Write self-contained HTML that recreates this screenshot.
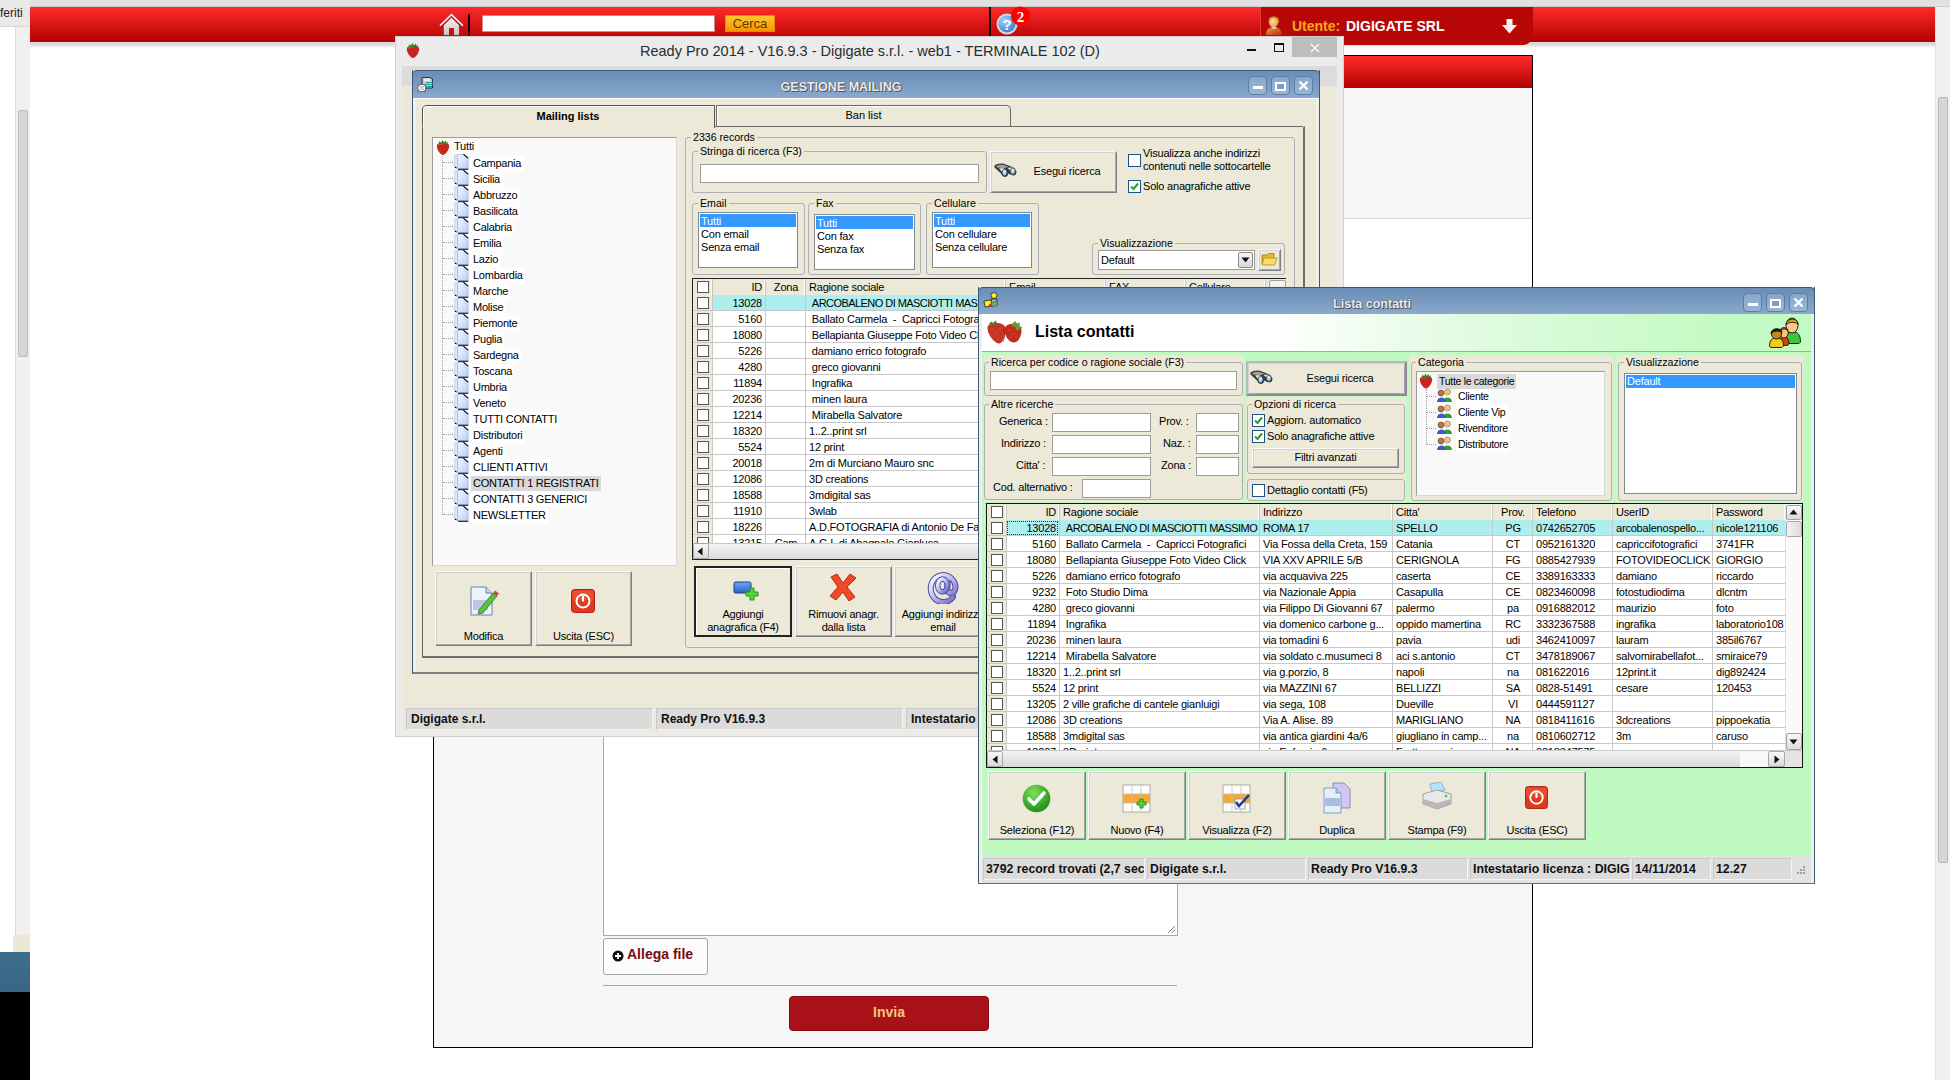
<!DOCTYPE html><html><head><meta charset="utf-8"><style>
*{box-sizing:border-box;margin:0;padding:0}
html,body{width:1950px;height:1080px;overflow:hidden;background:#fff;font-family:"Liberation Sans",sans-serif;font-size:10.6px;color:#000}
.a{position:absolute}
.t{position:absolute;white-space:nowrap;line-height:13px}
.beige{background:#ece9d8}
.grp{position:absolute;border:1px solid #aeaeb4;border-radius:3px}
.grpl{position:absolute;background:#ece9d8;padding:0 2px;line-height:12px;white-space:nowrap}
.inp{position:absolute;background:#fff;border:1px solid #7f9db9}
.btn{position:absolute;background:#ece9d8;border:1px solid #f8f8fa;border-right-color:#808084;border-bottom-color:#808084;box-shadow:inset 1px 1px 0 #d0d0d8,inset -1px -1px 0 #a6a6aa}
.cb{position:absolute;width:13px;height:13px;background:#fff;border:1px solid #1c5180}
.tbtn{position:absolute;width:19px;height:19px;border:1px solid #5c7ea6;border-radius:4px;background:linear-gradient(#86a6cb,#9ab6d6)}
</style></head><body>
<div class="a" style="left:0px;top:0px;width:1950px;height:7px;background:#e1e1e1;border-bottom:1px solid #c6cbcb"></div>
<div class="a" style="left:0px;top:0px;width:30px;height:27px;background:#e9e9e9;border-bottom:1px solid #d6d6d6"></div>
<div class="t" style="left:0px;top:7px;font-size:12px;color:#222">feriti</div>
<div class="a" style="left:15px;top:27px;width:15px;height:908px;background:#f0f0f0;border-left:1px solid #dadada"></div>
<div class="a" style="left:18px;top:110px;width:10px;height:247px;background:#d6d6d6;border:1px solid #bdbdbd;border-radius:2px"></div>
<div class="a" style="left:13px;top:935px;width:17px;height:17px;background:#ebe8d8"></div>
<div class="a" style="left:0px;top:952px;width:30px;height:40px;background:linear-gradient(#3f6e8d,#386582)"></div>
<div class="a" style="left:0px;top:992px;width:30px;height:88px;background:#000"></div>
<div class="a" style="left:1935px;top:7px;width:15px;height:1073px;background:#f0f0f0;border-left:1px solid #e2e2e2"></div>
<div class="a" style="left:1938px;top:97px;width:10px;height:766px;background:#d6d6d6;border:1px solid #b9b9b9;border-radius:2px"></div>
<div class="a" style="left:30px;top:42px;width:1905px;height:6px;background:linear-gradient(#d9d9d9 0,#dadada 45%,#ffffff)"></div>
<div class="a" style="left:30px;top:7px;width:1905px;height:35px;background:linear-gradient(#ff2b2b,#b30000)"></div>
<div class="a" style="left:433px;top:55px;width:1100px;height:993px;background:#f6f6f6;border:1px solid #000"></div>
<div class="a" style="left:434px;top:56px;width:1098px;height:32px;background:linear-gradient(#ff2b2b,#b40000)"></div>
<div class="a" style="left:434px;top:218px;width:1098px;height:482px;background:#fff;border-top:1px solid #d8d8d8"></div>
<div class="a" style="left:603px;top:700px;width:575px;height:236px;background:#fff;border:1px solid #a9a9a9"></div>
<svg class="a" style="left:1167px;top:925px" width="9" height="9" viewBox="0 0 9 9"><path d="M8 1L1 8M8 4.5L4.5 8" stroke="#808080" stroke-width="1"/></svg>
<div class="a" style="left:603px;top:938px;width:105px;height:37px;background:#fcfcfc;border:1px solid #a6a6a6;border-radius:3px"></div>
<svg class="a" style="left:612px;top:950px" width="12" height="12" viewBox="0 0 12 12"><circle cx="6" cy="6" r="5.5" fill="#111"/><path d="M6 3v6M3 6h6" stroke="#fff" stroke-width="1.8"/></svg>
<div class="t" style="left:627px;top:948px;font-size:14px;font-weight:bold;color:#7a0a10">Allega file</div>
<div class="a" style="left:603px;top:985px;width:574px;height:1px;background:#a8a8a8"></div>
<div class="a" style="left:789px;top:996px;width:200px;height:35px;background:#a81118;border-radius:4px;border:1px solid #8a0a10"></div>
<div class="t" style="left:789px;top:1006px;width:200px;text-align:center;font-size:14px;font-weight:bold;color:#f7c47c">Invia</div>
<svg class="a" style="left:439px;top:13px" width="26" height="23" viewBox="0 0 26 23">
<defs><linearGradient id="hg" x1="0" y1="0" x2="0" y2="1"><stop offset="0" stop-color="#f4f4f4"/><stop offset="1" stop-color="#c4c4c4"/></linearGradient></defs>
<path d="M1.3 12.4 L12.5 1.6 L23.5 12.4" fill="none" stroke="#7a1010" stroke-width="2.6" stroke-linecap="round" opacity="0.45" transform="translate(0,0.8)"/>
<path d="M1.3 12.4 L12.5 1.6 L23.5 12.4" fill="none" stroke="#f6f6f6" stroke-width="1.5" stroke-linecap="round"/>
<path d="M4.8 12.3 L12.5 4.8 L20 12.3 V21.2 Q20 22 19.2 22 H15 V15.8 Q15 15 14.2 15 H10.7 Q10 15 10 15.8 V22 H5.6 Q4.8 22 4.8 21.2Z" fill="url(#hg)"/>
</svg>
<div class="a" style="left:468px;top:14px;width:2px;height:22px;background:#1a0000"></div>
<div class="a" style="left:482px;top:15px;width:233px;height:17px;background:#fff;border:1px solid #d88"></div>
<div class="a" style="left:725px;top:15px;width:50px;height:17px;background:linear-gradient(#ffc733,#f59500);border:1px solid #e48a00"></div>
<div class="t" style="left:725px;top:17px;width:50px;text-align:center;font-size:13px;color:#5c3b00">Cerca</div>
<div class="a" style="left:989px;top:7px;width:2px;height:29px;background:#150000"></div>
<svg class="a" style="left:995px;top:5px" width="36" height="32" viewBox="0 0 36 32">
<defs><radialGradient id="hb" cx="0.35" cy="0.3" r="0.8"><stop offset="0" stop-color="#a8d4ff"/><stop offset="1" stop-color="#2a78d0"/></radialGradient></defs>
<circle cx="12" cy="19" r="10.5" fill="#d8d8d8"/>
<circle cx="12" cy="19" r="8.5" fill="url(#hb)"/>
<text x="12" y="24.5" font-family="Liberation Sans" font-weight="bold" font-size="15" fill="#fff" text-anchor="middle">?</text>
<circle cx="25.5" cy="11" r="9.5" fill="#ff0000"/>
<text x="25.5" y="16.5" font-family="Liberation Serif" font-weight="bold" font-size="15" fill="#fff" text-anchor="middle">2</text>
</svg>
<div class="a" style="left:1260px;top:7px;width:273px;height:38px;background:#b80707;border-bottom-right-radius:10px;border-left:1px solid #e03a3a"></div>
<svg class="a" style="left:1264px;top:14px" width="20" height="22" viewBox="0 0 20 22">
<defs><linearGradient id="pb" x1="0" y1="0" x2="1" y2="1"><stop offset="0" stop-color="#f89838"/><stop offset="1" stop-color="#b83010"/></linearGradient>
<radialGradient id="pf" cx="0.45" cy="0.4" r="0.6"><stop offset="0" stop-color="#ffd8a0"/><stop offset="1" stop-color="#f0a060"/></radialGradient></defs>
<path d="M2 21 C2 15 5 13 10 13 C15 13 17.5 15 17.5 21 Z" fill="url(#pb)"/>
<path d="M7.5 13 L12.5 13 L11.5 15 L8.5 15Z" fill="#b8d8f0"/>
<ellipse cx="9.5" cy="8" rx="4.6" ry="5.3" fill="url(#pf)"/>
<path d="M4.5 7 C4.5 1.5 14.5 0.5 15 6.5 L14.5 9.5 C14 6 12 4.5 10 4 C8 4 6 5 5 8Z" fill="#c0a010"/>
</svg>
<div class="t" style="left:1292px;top:18px;font-size:14px;font-weight:bold;color:#f9a51c;line-height:16px">Utente:</div>
<div class="t" style="left:1346px;top:18px;font-size:14px;font-weight:bold;color:#fff;line-height:16px">DIGIGATE SRL</div>
<svg class="a" style="left:1501px;top:19px" width="17" height="15" viewBox="0 0 17 15">
<path d="M5.5 0 H11.5 V6 H16 L8.5 14.5 L1 6 H5.5 Z" fill="#f2f2f2"/></svg>
<div class="a" style="left:395px;top:36px;width:949px;height:701px;background:#ebebeb;border:1px solid #cfcfcf"></div>
<svg class="a" style="left:406px;top:42px" width="14" height="17" viewBox="0 0 14 16">
<path d="M0.8 6.5 C0.8 3.8 4 3.2 7 3.6 C10 3.2 13.2 3.8 13.2 6.5 C13.2 10.5 9.2 15.6 7 15.6 C4.8 15.6 0.8 10.5 0.8 6.5Z" fill="#c8261e"/>
<path d="M2.5 6 C3 4.8 5 4.5 6 4.8" stroke="#e86050" stroke-width="0.9" fill="none"/>
<g fill="#8a1010"><circle cx="4" cy="8" r="0.4"/><circle cx="7" cy="9" r="0.4"/><circle cx="10" cy="8" r="0.4"/><circle cx="5.5" cy="11.5" r="0.4"/><circle cx="8.5" cy="11.5" r="0.4"/></g>
<path d="M2.5 4.2 L3.5 1.5 L5 3.2 L6.5 0.5 L8 3 L9.5 1 L10.5 3.2 L12 2 L11.5 4.5 L7 5 Z" fill="#3f7f22"/>
</svg>
<div class="t" style="left:640px;top:43px;font-size:14.5px;color:#2b2b2b;line-height:17px">Ready Pro 2014 - V16.9.3 - Digigate s.r.l. - web1 - TERMINALE 102 (D)</div>
<div class="a" style="left:1247px;top:49px;width:9px;height:2px;background:#111"></div>
<div class="a" style="left:1274px;top:43px;width:10px;height:9px;border:1px solid #111;border-top-width:2px"></div>
<div class="a" style="left:1292px;top:37px;width:45px;height:20px;background:#bdbdbd"></div>
<svg class="a" style="left:1310px;top:43px" width="10" height="10" viewBox="0 0 10 10"><path d="M1 1L9 9M9 1L1 9" stroke="#fff" stroke-width="1.3"/></svg>
<div class="a" style="left:402px;top:66px;width:935px;height:641px;background:#ece9d8"></div>
<div class="a" style="left:402px;top:66px;width:935px;height:20px;background:#dcdcdc"></div>
<div class="a" style="left:402px;top:707px;width:935px;height:24px;background:#ece9d8"></div>
<div class="a" style="left:406px;top:708px;width:247px;height:22px;background:#dbdbdb;border:1px solid #c8c8c8;border-bottom-color:#f4f4f4;border-right-color:#f4f4f4"></div>
<div class="t" style="left:411px;top:712px;font-size:12px;font-weight:bold;color:#111;line-height:14px">Digigate s.r.l.</div>
<div class="a" style="left:656px;top:708px;width:247px;height:22px;background:#dbdbdb;border:1px solid #c8c8c8;border-bottom-color:#f4f4f4;border-right-color:#f4f4f4"></div>
<div class="t" style="left:661px;top:712px;font-size:12px;font-weight:bold;color:#111;line-height:14px">Ready Pro V16.9.3</div>
<div class="a" style="left:906px;top:708px;width:431px;height:22px;background:#dbdbdb;border:1px solid #c8c8c8;border-bottom-color:#f4f4f4;border-right-color:#f4f4f4"></div>
<div class="t" style="left:911px;top:712px;font-size:12px;font-weight:bold;color:#111;line-height:14px">Intestatario</div>
<div class="a" style="left:412px;top:70px;width:908px;height:604px;background:#ece9d8;border:1px solid #3f5670;border-top:none;border-bottom-color:#808080"></div>
<div class="a" style="left:413px;top:98px;width:3px;height:575px;background:#f1f1f1"></div>
<div class="a" style="left:1316px;top:98px;width:3px;height:575px;background:#f1f1f1"></div>
<div class="a" style="left:412px;top:70px;width:908px;height:28px;background:linear-gradient(#698db6,#8aa9cd);border:1px solid #3f5670;border-bottom:none;border-radius:5px 5px 0 0"></div>
<div class="t" style="left:760px;top:80px;width:162px;text-align:center;font-size:12.5px;font-weight:bold;color:#ececec;text-shadow:1px 1px 0 #555,0 0 1px #333;line-height:14px">GESTIONE MAILING</div>
<svg class="a" style="left:417px;top:76px" width="17" height="17" viewBox="0 0 17 17">
<path d="M5 1.5 H13 L15.5 3 V12 H5Z" fill="#c8c8c8" stroke="#222" stroke-width="0.9"/>
<rect x="7" y="2.5" width="6" height="3" fill="#e8e8e8"/>
<path d="M9 6.5H16M9 8.5H16M9 10.5H15" stroke="#1a9a9a" stroke-width="1.1"/>
<path d="M1 8.5 L8.5 8.5 L8.5 15.5 L1 15.5 Z" fill="#fbfbfb" stroke="#666" stroke-width="0.9"/>
<path d="M1 8.5 L4.75 12 L8.5 8.5 M1 15.5 L4 12.5 M8.5 15.5 L5.5 12.5" fill="none" stroke="#777" stroke-width="0.8"/>
</svg>
<div class="tbtn" style="left:1248px;top:76px"></div>
<div class="tbtn" style="left:1271px;top:76px"></div>
<div class="tbtn" style="left:1294px;top:76px"></div>
<div class="a" style="left:1253px;top:86px;width:10px;height:3px;background:#fff"></div>
<div class="a" style="left:1275px;top:82px;width:11px;height:9px;border:2px solid #fff;border-top-width:2px;background:#7f9dc2"></div>
<svg class="a" style="left:1298px;top:80px" width="11" height="11" viewBox="0 0 11 11"><path d="M1.5 1.5L9.5 9.5M9.5 1.5L1.5 9.5" stroke="#fff" stroke-width="2.4"/></svg>
<div class="a" style="left:413px;top:98px;width:906px;height:1px;background:#fff"></div>
<div class="a" style="left:413px;top:672px;width:906px;height:1px;background:#808080"></div>
<svg class="a" style="left:422px;top:105px" width="293" height="23" viewBox="0 0 293 23">
<path d="M0.5 23 V3 L3 0.5 H292.5 V23" fill="#ece9d8" stroke="#555" stroke-width="1"/>
<path d="M1.5 23 V3.5 L3.5 1.5 H291.5" fill="none" stroke="#fff" stroke-width="1"/>
</svg>
<div class="t" style="left:422px;top:110px;width:292px;text-align:center;font-weight:bold;font-size:11px">Mailing lists</div>
<div class="a" style="left:716px;top:105px;width:295px;height:21px;background:#ece9d8;border:1px solid #6a6a6a;border-bottom:none;border-radius:0 5px 0 0;box-shadow:inset 1px 1px 0 #fff"></div>
<div class="t" style="left:716px;top:109px;width:295px;text-align:center;font-size:11px">Ban list</div>
<div class="a" style="left:422px;top:126px;width:883px;height:532px;border:1px solid #fff;border-right:2px solid #6e6e6e;border-bottom:2px solid #6e6e6e;border-left-color:#5f5f5f"></div>
<div class="a" style="left:423px;top:126px;width:292px;height:1px;background:#ece9d8"></div>
<div class="a" style="left:714px;top:126px;width:589px;height:1px;background:#6e6e6e"></div>
<div class="a" style="left:432px;top:137px;width:245px;height:429px;background:#f9f9f9;border:1px solid #9c9c9c;border-right-color:#d8d8d8;border-bottom-color:#d8d8d8"></div>
<svg class="a" style="left:436px;top:139px" width="14" height="17" viewBox="0 0 14 16">
<path d="M0.8 6.5 C0.8 3.8 4 3.2 7 3.6 C10 3.2 13.2 3.8 13.2 6.5 C13.2 10.5 9.2 15.6 7 15.6 C4.8 15.6 0.8 10.5 0.8 6.5Z" fill="#c8261e"/>
<path d="M2.5 6 C3 4.8 5 4.5 6 4.8" stroke="#e86050" stroke-width="0.9" fill="none"/>
<g fill="#8a1010"><circle cx="4" cy="8" r="0.4"/><circle cx="7" cy="9" r="0.4"/><circle cx="10" cy="8" r="0.4"/><circle cx="5.5" cy="11.5" r="0.4"/><circle cx="8.5" cy="11.5" r="0.4"/></g>
<path d="M2.5 4.2 L3.5 1.5 L5 3.2 L6.5 0.5 L8 3 L9.5 1 L10.5 3.2 L12 2 L11.5 4.5 L7 5 Z" fill="#3f7f22"/>
</svg>
<div class="a" style="left:452px;top:141px;width:26px;height:14px;background:#fcfcfc"></div>
<div class="t" style="left:454px;top:140px;font-size:11px;letter-spacing:-0.2px">Tutti</div>
<div class="a" style="left:442px;top:156px;width:1px;height:359px;border-left:1px dotted #a0a0a0"></div>
<div class="a" style="left:443px;top:162px;width:10px;height:1px;border-top:1px dotted #a0a0a0"></div>
<svg class="a" style="left:454px;top:154px" width="15" height="16" viewBox="0 0 15 16">
<defs><linearGradient id="pg454154" x1="0" y1="0" x2="1" y2="1"><stop offset="0" stop-color="#f4f8ff"/><stop offset="1" stop-color="#b8cff0"/></linearGradient></defs>
<path d="M0.5 1 H4 V14 H2 L0.5 12.5Z" fill="#dfe9fa" stroke="#a9bde8" stroke-width="0.6"/>
<path d="M3.5 0.5 H10 L14 4 V15 H4 L3.5 14.5Z" fill="url(#pg454154)" stroke="#9fb5e6" stroke-width="0.8"/>
<path d="M9.5 0.3 L14.2 4.2" stroke="#000" stroke-width="1.1"/>
<path d="M4 15.2 H14.2 M0.8 12.8 L2.5 14.2" stroke="#000" stroke-width="1.1"/>
</svg>
<div class="t" style="left:471px;top:156px;font-size:11px;letter-spacing:-0.25px;padding:0 2px;background:#ffffff;line-height:15px">Campania</div>
<div class="a" style="left:443px;top:178px;width:10px;height:1px;border-top:1px dotted #a0a0a0"></div>
<svg class="a" style="left:454px;top:170px" width="15" height="16" viewBox="0 0 15 16">
<defs><linearGradient id="pg454170" x1="0" y1="0" x2="1" y2="1"><stop offset="0" stop-color="#f4f8ff"/><stop offset="1" stop-color="#b8cff0"/></linearGradient></defs>
<path d="M0.5 1 H4 V14 H2 L0.5 12.5Z" fill="#dfe9fa" stroke="#a9bde8" stroke-width="0.6"/>
<path d="M3.5 0.5 H10 L14 4 V15 H4 L3.5 14.5Z" fill="url(#pg454170)" stroke="#9fb5e6" stroke-width="0.8"/>
<path d="M9.5 0.3 L14.2 4.2" stroke="#000" stroke-width="1.1"/>
<path d="M4 15.2 H14.2 M0.8 12.8 L2.5 14.2" stroke="#000" stroke-width="1.1"/>
</svg>
<div class="t" style="left:471px;top:172px;font-size:11px;letter-spacing:-0.25px;padding:0 2px;background:#ffffff;line-height:15px">Sicilia</div>
<div class="a" style="left:443px;top:194px;width:10px;height:1px;border-top:1px dotted #a0a0a0"></div>
<svg class="a" style="left:454px;top:186px" width="15" height="16" viewBox="0 0 15 16">
<defs><linearGradient id="pg454186" x1="0" y1="0" x2="1" y2="1"><stop offset="0" stop-color="#f4f8ff"/><stop offset="1" stop-color="#b8cff0"/></linearGradient></defs>
<path d="M0.5 1 H4 V14 H2 L0.5 12.5Z" fill="#dfe9fa" stroke="#a9bde8" stroke-width="0.6"/>
<path d="M3.5 0.5 H10 L14 4 V15 H4 L3.5 14.5Z" fill="url(#pg454186)" stroke="#9fb5e6" stroke-width="0.8"/>
<path d="M9.5 0.3 L14.2 4.2" stroke="#000" stroke-width="1.1"/>
<path d="M4 15.2 H14.2 M0.8 12.8 L2.5 14.2" stroke="#000" stroke-width="1.1"/>
</svg>
<div class="t" style="left:471px;top:188px;font-size:11px;letter-spacing:-0.25px;padding:0 2px;background:#ffffff;line-height:15px">Abbruzzo</div>
<div class="a" style="left:443px;top:210px;width:10px;height:1px;border-top:1px dotted #a0a0a0"></div>
<svg class="a" style="left:454px;top:202px" width="15" height="16" viewBox="0 0 15 16">
<defs><linearGradient id="pg454202" x1="0" y1="0" x2="1" y2="1"><stop offset="0" stop-color="#f4f8ff"/><stop offset="1" stop-color="#b8cff0"/></linearGradient></defs>
<path d="M0.5 1 H4 V14 H2 L0.5 12.5Z" fill="#dfe9fa" stroke="#a9bde8" stroke-width="0.6"/>
<path d="M3.5 0.5 H10 L14 4 V15 H4 L3.5 14.5Z" fill="url(#pg454202)" stroke="#9fb5e6" stroke-width="0.8"/>
<path d="M9.5 0.3 L14.2 4.2" stroke="#000" stroke-width="1.1"/>
<path d="M4 15.2 H14.2 M0.8 12.8 L2.5 14.2" stroke="#000" stroke-width="1.1"/>
</svg>
<div class="t" style="left:471px;top:204px;font-size:11px;letter-spacing:-0.25px;padding:0 2px;background:#ffffff;line-height:15px">Basilicata</div>
<div class="a" style="left:443px;top:226px;width:10px;height:1px;border-top:1px dotted #a0a0a0"></div>
<svg class="a" style="left:454px;top:218px" width="15" height="16" viewBox="0 0 15 16">
<defs><linearGradient id="pg454218" x1="0" y1="0" x2="1" y2="1"><stop offset="0" stop-color="#f4f8ff"/><stop offset="1" stop-color="#b8cff0"/></linearGradient></defs>
<path d="M0.5 1 H4 V14 H2 L0.5 12.5Z" fill="#dfe9fa" stroke="#a9bde8" stroke-width="0.6"/>
<path d="M3.5 0.5 H10 L14 4 V15 H4 L3.5 14.5Z" fill="url(#pg454218)" stroke="#9fb5e6" stroke-width="0.8"/>
<path d="M9.5 0.3 L14.2 4.2" stroke="#000" stroke-width="1.1"/>
<path d="M4 15.2 H14.2 M0.8 12.8 L2.5 14.2" stroke="#000" stroke-width="1.1"/>
</svg>
<div class="t" style="left:471px;top:220px;font-size:11px;letter-spacing:-0.25px;padding:0 2px;background:#ffffff;line-height:15px">Calabria</div>
<div class="a" style="left:443px;top:242px;width:10px;height:1px;border-top:1px dotted #a0a0a0"></div>
<svg class="a" style="left:454px;top:234px" width="15" height="16" viewBox="0 0 15 16">
<defs><linearGradient id="pg454234" x1="0" y1="0" x2="1" y2="1"><stop offset="0" stop-color="#f4f8ff"/><stop offset="1" stop-color="#b8cff0"/></linearGradient></defs>
<path d="M0.5 1 H4 V14 H2 L0.5 12.5Z" fill="#dfe9fa" stroke="#a9bde8" stroke-width="0.6"/>
<path d="M3.5 0.5 H10 L14 4 V15 H4 L3.5 14.5Z" fill="url(#pg454234)" stroke="#9fb5e6" stroke-width="0.8"/>
<path d="M9.5 0.3 L14.2 4.2" stroke="#000" stroke-width="1.1"/>
<path d="M4 15.2 H14.2 M0.8 12.8 L2.5 14.2" stroke="#000" stroke-width="1.1"/>
</svg>
<div class="t" style="left:471px;top:236px;font-size:11px;letter-spacing:-0.25px;padding:0 2px;background:#ffffff;line-height:15px">Emilia</div>
<div class="a" style="left:443px;top:258px;width:10px;height:1px;border-top:1px dotted #a0a0a0"></div>
<svg class="a" style="left:454px;top:250px" width="15" height="16" viewBox="0 0 15 16">
<defs><linearGradient id="pg454250" x1="0" y1="0" x2="1" y2="1"><stop offset="0" stop-color="#f4f8ff"/><stop offset="1" stop-color="#b8cff0"/></linearGradient></defs>
<path d="M0.5 1 H4 V14 H2 L0.5 12.5Z" fill="#dfe9fa" stroke="#a9bde8" stroke-width="0.6"/>
<path d="M3.5 0.5 H10 L14 4 V15 H4 L3.5 14.5Z" fill="url(#pg454250)" stroke="#9fb5e6" stroke-width="0.8"/>
<path d="M9.5 0.3 L14.2 4.2" stroke="#000" stroke-width="1.1"/>
<path d="M4 15.2 H14.2 M0.8 12.8 L2.5 14.2" stroke="#000" stroke-width="1.1"/>
</svg>
<div class="t" style="left:471px;top:252px;font-size:11px;letter-spacing:-0.25px;padding:0 2px;background:#ffffff;line-height:15px">Lazio</div>
<div class="a" style="left:443px;top:274px;width:10px;height:1px;border-top:1px dotted #a0a0a0"></div>
<svg class="a" style="left:454px;top:266px" width="15" height="16" viewBox="0 0 15 16">
<defs><linearGradient id="pg454266" x1="0" y1="0" x2="1" y2="1"><stop offset="0" stop-color="#f4f8ff"/><stop offset="1" stop-color="#b8cff0"/></linearGradient></defs>
<path d="M0.5 1 H4 V14 H2 L0.5 12.5Z" fill="#dfe9fa" stroke="#a9bde8" stroke-width="0.6"/>
<path d="M3.5 0.5 H10 L14 4 V15 H4 L3.5 14.5Z" fill="url(#pg454266)" stroke="#9fb5e6" stroke-width="0.8"/>
<path d="M9.5 0.3 L14.2 4.2" stroke="#000" stroke-width="1.1"/>
<path d="M4 15.2 H14.2 M0.8 12.8 L2.5 14.2" stroke="#000" stroke-width="1.1"/>
</svg>
<div class="t" style="left:471px;top:268px;font-size:11px;letter-spacing:-0.25px;padding:0 2px;background:#ffffff;line-height:15px">Lombardia</div>
<div class="a" style="left:443px;top:290px;width:10px;height:1px;border-top:1px dotted #a0a0a0"></div>
<svg class="a" style="left:454px;top:282px" width="15" height="16" viewBox="0 0 15 16">
<defs><linearGradient id="pg454282" x1="0" y1="0" x2="1" y2="1"><stop offset="0" stop-color="#f4f8ff"/><stop offset="1" stop-color="#b8cff0"/></linearGradient></defs>
<path d="M0.5 1 H4 V14 H2 L0.5 12.5Z" fill="#dfe9fa" stroke="#a9bde8" stroke-width="0.6"/>
<path d="M3.5 0.5 H10 L14 4 V15 H4 L3.5 14.5Z" fill="url(#pg454282)" stroke="#9fb5e6" stroke-width="0.8"/>
<path d="M9.5 0.3 L14.2 4.2" stroke="#000" stroke-width="1.1"/>
<path d="M4 15.2 H14.2 M0.8 12.8 L2.5 14.2" stroke="#000" stroke-width="1.1"/>
</svg>
<div class="t" style="left:471px;top:284px;font-size:11px;letter-spacing:-0.25px;padding:0 2px;background:#ffffff;line-height:15px">Marche</div>
<div class="a" style="left:443px;top:306px;width:10px;height:1px;border-top:1px dotted #a0a0a0"></div>
<svg class="a" style="left:454px;top:298px" width="15" height="16" viewBox="0 0 15 16">
<defs><linearGradient id="pg454298" x1="0" y1="0" x2="1" y2="1"><stop offset="0" stop-color="#f4f8ff"/><stop offset="1" stop-color="#b8cff0"/></linearGradient></defs>
<path d="M0.5 1 H4 V14 H2 L0.5 12.5Z" fill="#dfe9fa" stroke="#a9bde8" stroke-width="0.6"/>
<path d="M3.5 0.5 H10 L14 4 V15 H4 L3.5 14.5Z" fill="url(#pg454298)" stroke="#9fb5e6" stroke-width="0.8"/>
<path d="M9.5 0.3 L14.2 4.2" stroke="#000" stroke-width="1.1"/>
<path d="M4 15.2 H14.2 M0.8 12.8 L2.5 14.2" stroke="#000" stroke-width="1.1"/>
</svg>
<div class="t" style="left:471px;top:300px;font-size:11px;letter-spacing:-0.25px;padding:0 2px;background:#ffffff;line-height:15px">Molise</div>
<div class="a" style="left:443px;top:322px;width:10px;height:1px;border-top:1px dotted #a0a0a0"></div>
<svg class="a" style="left:454px;top:314px" width="15" height="16" viewBox="0 0 15 16">
<defs><linearGradient id="pg454314" x1="0" y1="0" x2="1" y2="1"><stop offset="0" stop-color="#f4f8ff"/><stop offset="1" stop-color="#b8cff0"/></linearGradient></defs>
<path d="M0.5 1 H4 V14 H2 L0.5 12.5Z" fill="#dfe9fa" stroke="#a9bde8" stroke-width="0.6"/>
<path d="M3.5 0.5 H10 L14 4 V15 H4 L3.5 14.5Z" fill="url(#pg454314)" stroke="#9fb5e6" stroke-width="0.8"/>
<path d="M9.5 0.3 L14.2 4.2" stroke="#000" stroke-width="1.1"/>
<path d="M4 15.2 H14.2 M0.8 12.8 L2.5 14.2" stroke="#000" stroke-width="1.1"/>
</svg>
<div class="t" style="left:471px;top:316px;font-size:11px;letter-spacing:-0.25px;padding:0 2px;background:#ffffff;line-height:15px">Piemonte</div>
<div class="a" style="left:443px;top:338px;width:10px;height:1px;border-top:1px dotted #a0a0a0"></div>
<svg class="a" style="left:454px;top:330px" width="15" height="16" viewBox="0 0 15 16">
<defs><linearGradient id="pg454330" x1="0" y1="0" x2="1" y2="1"><stop offset="0" stop-color="#f4f8ff"/><stop offset="1" stop-color="#b8cff0"/></linearGradient></defs>
<path d="M0.5 1 H4 V14 H2 L0.5 12.5Z" fill="#dfe9fa" stroke="#a9bde8" stroke-width="0.6"/>
<path d="M3.5 0.5 H10 L14 4 V15 H4 L3.5 14.5Z" fill="url(#pg454330)" stroke="#9fb5e6" stroke-width="0.8"/>
<path d="M9.5 0.3 L14.2 4.2" stroke="#000" stroke-width="1.1"/>
<path d="M4 15.2 H14.2 M0.8 12.8 L2.5 14.2" stroke="#000" stroke-width="1.1"/>
</svg>
<div class="t" style="left:471px;top:332px;font-size:11px;letter-spacing:-0.25px;padding:0 2px;background:#ffffff;line-height:15px">Puglia</div>
<div class="a" style="left:443px;top:354px;width:10px;height:1px;border-top:1px dotted #a0a0a0"></div>
<svg class="a" style="left:454px;top:346px" width="15" height="16" viewBox="0 0 15 16">
<defs><linearGradient id="pg454346" x1="0" y1="0" x2="1" y2="1"><stop offset="0" stop-color="#f4f8ff"/><stop offset="1" stop-color="#b8cff0"/></linearGradient></defs>
<path d="M0.5 1 H4 V14 H2 L0.5 12.5Z" fill="#dfe9fa" stroke="#a9bde8" stroke-width="0.6"/>
<path d="M3.5 0.5 H10 L14 4 V15 H4 L3.5 14.5Z" fill="url(#pg454346)" stroke="#9fb5e6" stroke-width="0.8"/>
<path d="M9.5 0.3 L14.2 4.2" stroke="#000" stroke-width="1.1"/>
<path d="M4 15.2 H14.2 M0.8 12.8 L2.5 14.2" stroke="#000" stroke-width="1.1"/>
</svg>
<div class="t" style="left:471px;top:348px;font-size:11px;letter-spacing:-0.25px;padding:0 2px;background:#ffffff;line-height:15px">Sardegna</div>
<div class="a" style="left:443px;top:370px;width:10px;height:1px;border-top:1px dotted #a0a0a0"></div>
<svg class="a" style="left:454px;top:362px" width="15" height="16" viewBox="0 0 15 16">
<defs><linearGradient id="pg454362" x1="0" y1="0" x2="1" y2="1"><stop offset="0" stop-color="#f4f8ff"/><stop offset="1" stop-color="#b8cff0"/></linearGradient></defs>
<path d="M0.5 1 H4 V14 H2 L0.5 12.5Z" fill="#dfe9fa" stroke="#a9bde8" stroke-width="0.6"/>
<path d="M3.5 0.5 H10 L14 4 V15 H4 L3.5 14.5Z" fill="url(#pg454362)" stroke="#9fb5e6" stroke-width="0.8"/>
<path d="M9.5 0.3 L14.2 4.2" stroke="#000" stroke-width="1.1"/>
<path d="M4 15.2 H14.2 M0.8 12.8 L2.5 14.2" stroke="#000" stroke-width="1.1"/>
</svg>
<div class="t" style="left:471px;top:364px;font-size:11px;letter-spacing:-0.25px;padding:0 2px;background:#ffffff;line-height:15px">Toscana</div>
<div class="a" style="left:443px;top:386px;width:10px;height:1px;border-top:1px dotted #a0a0a0"></div>
<svg class="a" style="left:454px;top:378px" width="15" height="16" viewBox="0 0 15 16">
<defs><linearGradient id="pg454378" x1="0" y1="0" x2="1" y2="1"><stop offset="0" stop-color="#f4f8ff"/><stop offset="1" stop-color="#b8cff0"/></linearGradient></defs>
<path d="M0.5 1 H4 V14 H2 L0.5 12.5Z" fill="#dfe9fa" stroke="#a9bde8" stroke-width="0.6"/>
<path d="M3.5 0.5 H10 L14 4 V15 H4 L3.5 14.5Z" fill="url(#pg454378)" stroke="#9fb5e6" stroke-width="0.8"/>
<path d="M9.5 0.3 L14.2 4.2" stroke="#000" stroke-width="1.1"/>
<path d="M4 15.2 H14.2 M0.8 12.8 L2.5 14.2" stroke="#000" stroke-width="1.1"/>
</svg>
<div class="t" style="left:471px;top:380px;font-size:11px;letter-spacing:-0.25px;padding:0 2px;background:#ffffff;line-height:15px">Umbria</div>
<div class="a" style="left:443px;top:402px;width:10px;height:1px;border-top:1px dotted #a0a0a0"></div>
<svg class="a" style="left:454px;top:394px" width="15" height="16" viewBox="0 0 15 16">
<defs><linearGradient id="pg454394" x1="0" y1="0" x2="1" y2="1"><stop offset="0" stop-color="#f4f8ff"/><stop offset="1" stop-color="#b8cff0"/></linearGradient></defs>
<path d="M0.5 1 H4 V14 H2 L0.5 12.5Z" fill="#dfe9fa" stroke="#a9bde8" stroke-width="0.6"/>
<path d="M3.5 0.5 H10 L14 4 V15 H4 L3.5 14.5Z" fill="url(#pg454394)" stroke="#9fb5e6" stroke-width="0.8"/>
<path d="M9.5 0.3 L14.2 4.2" stroke="#000" stroke-width="1.1"/>
<path d="M4 15.2 H14.2 M0.8 12.8 L2.5 14.2" stroke="#000" stroke-width="1.1"/>
</svg>
<div class="t" style="left:471px;top:396px;font-size:11px;letter-spacing:-0.25px;padding:0 2px;background:#ffffff;line-height:15px">Veneto</div>
<div class="a" style="left:443px;top:418px;width:10px;height:1px;border-top:1px dotted #a0a0a0"></div>
<svg class="a" style="left:454px;top:410px" width="15" height="16" viewBox="0 0 15 16">
<defs><linearGradient id="pg454410" x1="0" y1="0" x2="1" y2="1"><stop offset="0" stop-color="#f4f8ff"/><stop offset="1" stop-color="#b8cff0"/></linearGradient></defs>
<path d="M0.5 1 H4 V14 H2 L0.5 12.5Z" fill="#dfe9fa" stroke="#a9bde8" stroke-width="0.6"/>
<path d="M3.5 0.5 H10 L14 4 V15 H4 L3.5 14.5Z" fill="url(#pg454410)" stroke="#9fb5e6" stroke-width="0.8"/>
<path d="M9.5 0.3 L14.2 4.2" stroke="#000" stroke-width="1.1"/>
<path d="M4 15.2 H14.2 M0.8 12.8 L2.5 14.2" stroke="#000" stroke-width="1.1"/>
</svg>
<div class="t" style="left:471px;top:412px;font-size:11px;letter-spacing:-0.25px;padding:0 2px;background:#ffffff;line-height:15px">TUTTI CONTATTI</div>
<div class="a" style="left:443px;top:434px;width:10px;height:1px;border-top:1px dotted #a0a0a0"></div>
<svg class="a" style="left:454px;top:426px" width="15" height="16" viewBox="0 0 15 16">
<defs><linearGradient id="pg454426" x1="0" y1="0" x2="1" y2="1"><stop offset="0" stop-color="#f4f8ff"/><stop offset="1" stop-color="#b8cff0"/></linearGradient></defs>
<path d="M0.5 1 H4 V14 H2 L0.5 12.5Z" fill="#dfe9fa" stroke="#a9bde8" stroke-width="0.6"/>
<path d="M3.5 0.5 H10 L14 4 V15 H4 L3.5 14.5Z" fill="url(#pg454426)" stroke="#9fb5e6" stroke-width="0.8"/>
<path d="M9.5 0.3 L14.2 4.2" stroke="#000" stroke-width="1.1"/>
<path d="M4 15.2 H14.2 M0.8 12.8 L2.5 14.2" stroke="#000" stroke-width="1.1"/>
</svg>
<div class="t" style="left:471px;top:428px;font-size:11px;letter-spacing:-0.25px;padding:0 2px;background:#ffffff;line-height:15px">Distributori</div>
<div class="a" style="left:443px;top:450px;width:10px;height:1px;border-top:1px dotted #a0a0a0"></div>
<svg class="a" style="left:454px;top:442px" width="15" height="16" viewBox="0 0 15 16">
<defs><linearGradient id="pg454442" x1="0" y1="0" x2="1" y2="1"><stop offset="0" stop-color="#f4f8ff"/><stop offset="1" stop-color="#b8cff0"/></linearGradient></defs>
<path d="M0.5 1 H4 V14 H2 L0.5 12.5Z" fill="#dfe9fa" stroke="#a9bde8" stroke-width="0.6"/>
<path d="M3.5 0.5 H10 L14 4 V15 H4 L3.5 14.5Z" fill="url(#pg454442)" stroke="#9fb5e6" stroke-width="0.8"/>
<path d="M9.5 0.3 L14.2 4.2" stroke="#000" stroke-width="1.1"/>
<path d="M4 15.2 H14.2 M0.8 12.8 L2.5 14.2" stroke="#000" stroke-width="1.1"/>
</svg>
<div class="t" style="left:471px;top:444px;font-size:11px;letter-spacing:-0.25px;padding:0 2px;background:#ffffff;line-height:15px">Agenti</div>
<div class="a" style="left:443px;top:466px;width:10px;height:1px;border-top:1px dotted #a0a0a0"></div>
<svg class="a" style="left:454px;top:458px" width="15" height="16" viewBox="0 0 15 16">
<defs><linearGradient id="pg454458" x1="0" y1="0" x2="1" y2="1"><stop offset="0" stop-color="#f4f8ff"/><stop offset="1" stop-color="#b8cff0"/></linearGradient></defs>
<path d="M0.5 1 H4 V14 H2 L0.5 12.5Z" fill="#dfe9fa" stroke="#a9bde8" stroke-width="0.6"/>
<path d="M3.5 0.5 H10 L14 4 V15 H4 L3.5 14.5Z" fill="url(#pg454458)" stroke="#9fb5e6" stroke-width="0.8"/>
<path d="M9.5 0.3 L14.2 4.2" stroke="#000" stroke-width="1.1"/>
<path d="M4 15.2 H14.2 M0.8 12.8 L2.5 14.2" stroke="#000" stroke-width="1.1"/>
</svg>
<div class="t" style="left:471px;top:460px;font-size:11px;letter-spacing:-0.25px;padding:0 2px;background:#ffffff;line-height:15px">CLIENTI ATTIVI</div>
<div class="a" style="left:443px;top:482px;width:10px;height:1px;border-top:1px dotted #a0a0a0"></div>
<svg class="a" style="left:454px;top:474px" width="15" height="16" viewBox="0 0 15 16">
<defs><linearGradient id="pg454474" x1="0" y1="0" x2="1" y2="1"><stop offset="0" stop-color="#f4f8ff"/><stop offset="1" stop-color="#b8cff0"/></linearGradient></defs>
<path d="M0.5 1 H4 V14 H2 L0.5 12.5Z" fill="#dfe9fa" stroke="#a9bde8" stroke-width="0.6"/>
<path d="M3.5 0.5 H10 L14 4 V15 H4 L3.5 14.5Z" fill="url(#pg454474)" stroke="#9fb5e6" stroke-width="0.8"/>
<path d="M9.5 0.3 L14.2 4.2" stroke="#000" stroke-width="1.1"/>
<path d="M4 15.2 H14.2 M0.8 12.8 L2.5 14.2" stroke="#000" stroke-width="1.1"/>
</svg>
<div class="t" style="left:471px;top:476px;font-size:11px;letter-spacing:-0.25px;padding:0 2px;background:#d9d9d9;line-height:15px">CONTATTI 1 REGISTRATI</div>
<div class="a" style="left:443px;top:498px;width:10px;height:1px;border-top:1px dotted #a0a0a0"></div>
<svg class="a" style="left:454px;top:490px" width="15" height="16" viewBox="0 0 15 16">
<defs><linearGradient id="pg454490" x1="0" y1="0" x2="1" y2="1"><stop offset="0" stop-color="#f4f8ff"/><stop offset="1" stop-color="#b8cff0"/></linearGradient></defs>
<path d="M0.5 1 H4 V14 H2 L0.5 12.5Z" fill="#dfe9fa" stroke="#a9bde8" stroke-width="0.6"/>
<path d="M3.5 0.5 H10 L14 4 V15 H4 L3.5 14.5Z" fill="url(#pg454490)" stroke="#9fb5e6" stroke-width="0.8"/>
<path d="M9.5 0.3 L14.2 4.2" stroke="#000" stroke-width="1.1"/>
<path d="M4 15.2 H14.2 M0.8 12.8 L2.5 14.2" stroke="#000" stroke-width="1.1"/>
</svg>
<div class="t" style="left:471px;top:492px;font-size:11px;letter-spacing:-0.25px;padding:0 2px;background:#ffffff;line-height:15px">CONTATTI 3 GENERICI</div>
<div class="a" style="left:443px;top:514px;width:10px;height:1px;border-top:1px dotted #a0a0a0"></div>
<svg class="a" style="left:454px;top:506px" width="15" height="16" viewBox="0 0 15 16">
<defs><linearGradient id="pg454506" x1="0" y1="0" x2="1" y2="1"><stop offset="0" stop-color="#f4f8ff"/><stop offset="1" stop-color="#b8cff0"/></linearGradient></defs>
<path d="M0.5 1 H4 V14 H2 L0.5 12.5Z" fill="#dfe9fa" stroke="#a9bde8" stroke-width="0.6"/>
<path d="M3.5 0.5 H10 L14 4 V15 H4 L3.5 14.5Z" fill="url(#pg454506)" stroke="#9fb5e6" stroke-width="0.8"/>
<path d="M9.5 0.3 L14.2 4.2" stroke="#000" stroke-width="1.1"/>
<path d="M4 15.2 H14.2 M0.8 12.8 L2.5 14.2" stroke="#000" stroke-width="1.1"/>
</svg>
<div class="t" style="left:471px;top:508px;font-size:11px;letter-spacing:-0.25px;padding:0 2px;background:#ffffff;line-height:15px">NEWSLETTER</div>
<div class="btn" style="left:435px;top:571px;width:97px;height:75px;"></div>
<div class="t" style="left:435px;top:630px;width:97px;text-align:center;font-size:11px;letter-spacing:-0.2px">Modifica</div>
<svg class="a" style="left:469px;top:585px" width="30" height="32" viewBox="0 0 30 32">
<path d="M2 2 H17 L23 8 V30 H2Z" fill="#eef3fb" stroke="#6080b8" stroke-width="1"/>
<path d="M17 2 V8 H23" fill="#c8d6ee" stroke="#6080b8" stroke-width="1"/>
<rect x="4" y="15" width="15" height="10" fill="#b8c8e0"/>
<path d="M10 25 L24 8 L28 11 L14 28 L9 29Z" fill="#5cc040" stroke="#2a7a20" stroke-width="0.8"/>
<path d="M24 8 L26 5.5 L30 8.5 L28 11Z" fill="#e04040"/>
</svg>
<div class="btn" style="left:535px;top:571px;width:97px;height:75px;"></div>
<div class="t" style="left:535px;top:630px;width:97px;text-align:center;font-size:11px;letter-spacing:-0.2px">Uscita (ESC)</div>
<svg class="a" style="left:571px;top:589px" width="24" height="24" viewBox="0 0 24 24">
<rect x="0.5" y="0.5" width="23" height="23" rx="3" fill="#e03a1e" stroke="#b02010" stroke-width="1"/>
<rect x="1.5" y="1.5" width="21" height="10" rx="2" fill="#f06040" opacity="0.5"/>
<circle cx="12" cy="12" r="6.5" fill="none" stroke="#fff" stroke-width="2"/>
<path d="M12 7 V12.5" stroke="#fff" stroke-width="2.2"/>
</svg>
<div class="grp" style="left:685px;top:137px;width:610px;height:511px"></div>
<div class="grpl" style="left:691px;top:131px;background:#ece9d8">2336 records</div>
<div class="grp" style="left:692px;top:151px;width:295px;height:42px"></div>
<div class="grpl" style="left:698px;top:145px;background:#ece9d8">Stringa di ricerca (F3)</div>
<div class="a" style="left:700px;top:164px;width:279px;height:19px;background:#fff;border:1px solid #9c9c9c"></div>
<div class="btn" style="left:990px;top:151px;width:127px;height:42px;"></div>
<svg class="a" style="left:993px;top:162px" width="25" height="16" viewBox="0 0 25 16">
<defs><radialGradient id="bl993" cx="0.4" cy="0.3" r="0.7"><stop offset="0" stop-color="#f0f8ff"/><stop offset="1" stop-color="#7ab8f8"/></radialGradient></defs>
<path d="M1.5 3.5 Q4 1 10 1.5 L17 4 L21 6 L23.5 9.5 Q23.5 13.5 20.5 13.5 Q17.5 13 15.5 11.5 Q14.5 15 11.5 15 Q9 14.5 8 11.5 L1.5 5.5Z" fill="#3a3a3a"/>
<path d="M3 4 Q6 2.5 10 2.8 L15.5 4.8 L11 6.3 L4 5.5Z" fill="#a0a0a0"/>
<path d="M6 6.3 L10.5 6.3 L12.2 7.8 L9.2 10.2Z" fill="#e4e4e4"/>
<path d="M14.5 5.8 L18.8 5.6 L20 7 L17 8.6Z" fill="#e4e4e4"/>
<ellipse cx="11.6" cy="10.6" rx="2.5" ry="3.3" fill="url(#bl993)" stroke="#2a2a2a" stroke-width="0.7"/>
<ellipse cx="19.9" cy="9.2" rx="2.4" ry="3.2" fill="url(#bl993)" stroke="#2a2a2a" stroke-width="0.7"/>
</svg>
<div class="t" style="left:1017px;top:165px;width:100px;text-align:center;font-size:11px;letter-spacing:-0.2px">Esegui ricerca</div>
<div class="cb" style="left:1128px;top:154px"></div>
<div class="t" style="left:1143px;top:147px;font-size:11px;letter-spacing:-0.2px">Visualizza anche indirizzi</div>
<div class="t" style="left:1143px;top:160px;font-size:11px;letter-spacing:-0.2px">contenuti nelle sottocartelle</div>
<div class="cb" style="left:1128px;top:180px"></div>
<svg class="a" style="left:1130px;top:182px" width="9" height="9" viewBox="0 0 9 9"><path d="M1 4.5L3.5 7L8 1.5" fill="none" stroke="#21a121" stroke-width="2"/></svg>
<div class="t" style="left:1143px;top:180px;font-size:11px;letter-spacing:-0.2px">Solo anagrafiche attive</div>
<div class="grp" style="left:692px;top:203px;width:113px;height:72px"></div>
<div class="grpl" style="left:698px;top:197px;background:#ece9d8">Email</div>
<div class="a" style="left:698px;top:212px;width:100px;height:56px;background:#fff;border:1px solid #828790"></div>
<div class="a" style="left:700px;top:214px;width:96px;height:13px;background:#3399ff"></div>
<div class="t" style="left:701px;top:215px;color:#fff;font-size:11px;letter-spacing:-0.2px">Tutti</div>
<div class="t" style="left:701px;top:228px;font-size:11px;letter-spacing:-0.2px">Con email</div>
<div class="t" style="left:701px;top:241px;font-size:11px;letter-spacing:-0.2px">Senza email</div>
<div class="grp" style="left:808px;top:203px;width:113px;height:72px"></div>
<div class="grpl" style="left:814px;top:197px;background:#ece9d8">Fax</div>
<div class="a" style="left:814px;top:214px;width:101px;height:56px;background:#fff;border:1px solid #828790"></div>
<div class="a" style="left:816px;top:216px;width:97px;height:13px;background:#3399ff"></div>
<div class="t" style="left:817px;top:217px;color:#fff;font-size:11px;letter-spacing:-0.2px">Tutti</div>
<div class="t" style="left:817px;top:230px;font-size:11px;letter-spacing:-0.2px">Con fax</div>
<div class="t" style="left:817px;top:243px;font-size:11px;letter-spacing:-0.2px">Senza fax</div>
<div class="grp" style="left:926px;top:203px;width:113px;height:72px"></div>
<div class="grpl" style="left:932px;top:197px;background:#ece9d8">Cellulare</div>
<div class="a" style="left:932px;top:212px;width:100px;height:56px;background:#fff;border:1px solid #828790"></div>
<div class="a" style="left:934px;top:214px;width:96px;height:13px;background:#3399ff"></div>
<div class="t" style="left:935px;top:215px;color:#fff;font-size:11px;letter-spacing:-0.2px">Tutti</div>
<div class="t" style="left:935px;top:228px;font-size:11px;letter-spacing:-0.2px">Con cellulare</div>
<div class="t" style="left:935px;top:241px;font-size:11px;letter-spacing:-0.2px">Senza cellulare</div>
<div class="grp" style="left:1092px;top:243px;width:193px;height:32px"></div>
<div class="grpl" style="left:1098px;top:237px;background:#ece9d8">Visualizzazione</div>
<div class="a" style="left:1098px;top:250px;width:157px;height:20px;background:#fff;border:1px solid #9c9c9c"></div>
<div class="t" style="left:1101px;top:254px;font-size:11px;letter-spacing:-0.2px">Default</div>
<div class="a" style="left:1238px;top:252px;width:15px;height:16px;background:linear-gradient(#f6f6f6,#d8d8d8);border:1px solid #8a8a8a;border-radius:2px"></div>
<svg class="a" style="left:1241px;top:257px" width="9" height="6" viewBox="0 0 9 6"><path d="M0.5 0.5H8.5L4.5 5.5Z" fill="#111"/></svg>
<div class="btn" style="left:1258px;top:249px;width:23px;height:22px;"></div>
<svg class="a" style="left:1261px;top:252px" width="17" height="15" viewBox="0 0 17 15">
<path d="M1 3 H6 L7.5 1.5 H13 V12 H1Z" fill="#e8b830" stroke="#a07810" stroke-width="0.8"/>
<path d="M3 6 H16 L13.5 13 H1Z" fill="#fbdc68" stroke="#b08a20" stroke-width="0.8"/>
</svg>
<div class="a" style="left:692px;top:278px;width:594px;height:282px;background:#fff;border:1px solid #222;overflow:hidden">
<div class="a" style="left:0px;top:0px;width:20px;height:16px;background:#ece9d8;border-right:1px solid #c9c6b5;box-shadow:inset -1px 0 0 #fff"></div>
<div class="a" style="left:4px;top:2px;width:12px;height:12px;background:#fff;border:1px solid #555"></div>
<div class="a" style="left:20px;top:0px;width:53px;height:16px;background:#ece9d8;border-right:1px solid #c9c6b5;box-shadow:inset -1px 0 0 #fff"></div>
<div class="t" style="left:20px;top:2px;width:49px;text-align:right;font-size:11px;letter-spacing:-0.2px">ID</div>
<div class="a" style="left:73px;top:0px;width:40px;height:16px;background:#ece9d8;border-right:1px solid #c9c6b5;box-shadow:inset -1px 0 0 #fff"></div>
<div class="t" style="left:73px;top:2px;width:40px;text-align:center;font-size:11px;letter-spacing:-0.2px">Zona</div>
<div class="a" style="left:113px;top:0px;width:200px;height:16px;background:#ece9d8;border-right:1px solid #c9c6b5;box-shadow:inset -1px 0 0 #fff"></div>
<div class="t" style="left:116px;top:2px;font-size:11px;letter-spacing:-0.2px">Ragione sociale</div>
<div class="a" style="left:313px;top:0px;width:100px;height:16px;background:#ece9d8;border-right:1px solid #c9c6b5;box-shadow:inset -1px 0 0 #fff"></div>
<div class="t" style="left:316px;top:2px;font-size:11px;letter-spacing:-0.2px">Email</div>
<div class="a" style="left:413px;top:0px;width:80px;height:16px;background:#ece9d8;border-right:1px solid #c9c6b5;box-shadow:inset -1px 0 0 #fff"></div>
<div class="t" style="left:416px;top:2px;font-size:11px;letter-spacing:-0.2px">FAX</div>
<div class="a" style="left:493px;top:0px;width:80px;height:16px;background:#ece9d8;border-right:1px solid #c9c6b5;box-shadow:inset -1px 0 0 #fff"></div>
<div class="t" style="left:496px;top:2px;font-size:11px;letter-spacing:-0.2px">Cellulare</div>
<div class="a" style="left:0px;top:16px;width:20px;height:16px;background:#ece9d8;border-right:1px solid #c8c8c8;border-bottom:1px solid #c8c8c8"></div>
<div class="a" style="left:4px;top:18px;width:12px;height:12px;background:#fff;border:1px solid #555"></div>
<div class="a" style="left:20px;top:16px;width:53px;height:16px;background:#afeeee;border-right:1px solid #c8c8c8;border-bottom:1px solid #c8c8c8"></div>
<div class="t" style="left:20px;top:18px;width:49px;text-align:right;font-size:11px;letter-spacing:-0.2px">13028</div>
<div class="a" style="left:73px;top:16px;width:40px;height:16px;background:#afeeee;border-right:1px solid #c8c8c8;border-bottom:1px solid #c8c8c8"></div>
<div class="t" style="left:73px;top:18px;width:40px;text-align:center;font-size:11px;letter-spacing:-0.2px"></div>
<div class="a" style="left:113px;top:16px;width:200px;height:16px;background:#afeeee;border-right:1px solid #c8c8c8;border-bottom:1px solid #c8c8c8"></div>
<div class="t" style="left:116px;top:18px;width:196px;overflow:hidden;font-size:11px;letter-spacing:-0.2px">&nbsp;<span style="letter-spacing:-0.55px">ARCOBALENO DI MASCIOTTI MASSIMO</span></div>
<div class="a" style="left:313px;top:16px;width:100px;height:16px;background:#afeeee;border-right:1px solid #c8c8c8;border-bottom:1px solid #c8c8c8"></div>
<div class="t" style="left:316px;top:18px;width:96px;overflow:hidden;font-size:11px;letter-spacing:-0.2px"></div>
<div class="a" style="left:413px;top:16px;width:80px;height:16px;background:#afeeee;border-right:1px solid #c8c8c8;border-bottom:1px solid #c8c8c8"></div>
<div class="t" style="left:416px;top:18px;width:76px;overflow:hidden;font-size:11px;letter-spacing:-0.2px"></div>
<div class="a" style="left:493px;top:16px;width:80px;height:16px;background:#afeeee;border-right:1px solid #c8c8c8;border-bottom:1px solid #c8c8c8"></div>
<div class="t" style="left:496px;top:18px;width:76px;overflow:hidden;font-size:11px;letter-spacing:-0.2px"></div>
<div class="a" style="left:0px;top:32px;width:20px;height:16px;background:#ece9d8;border-right:1px solid #c8c8c8;border-bottom:1px solid #c8c8c8"></div>
<div class="a" style="left:4px;top:34px;width:12px;height:12px;background:#fff;border:1px solid #555"></div>
<div class="a" style="left:20px;top:32px;width:53px;height:16px;background:#fff;border-right:1px solid #c8c8c8;border-bottom:1px solid #c8c8c8"></div>
<div class="t" style="left:20px;top:34px;width:49px;text-align:right;font-size:11px;letter-spacing:-0.2px">5160</div>
<div class="a" style="left:73px;top:32px;width:40px;height:16px;background:#fff;border-right:1px solid #c8c8c8;border-bottom:1px solid #c8c8c8"></div>
<div class="t" style="left:73px;top:34px;width:40px;text-align:center;font-size:11px;letter-spacing:-0.2px"></div>
<div class="a" style="left:113px;top:32px;width:200px;height:16px;background:#fff;border-right:1px solid #c8c8c8;border-bottom:1px solid #c8c8c8"></div>
<div class="t" style="left:116px;top:34px;width:196px;overflow:hidden;font-size:11px;letter-spacing:-0.2px">&nbsp;Ballato Carmela&nbsp; -&nbsp; Capricci Fotografici</div>
<div class="a" style="left:313px;top:32px;width:100px;height:16px;background:#fff;border-right:1px solid #c8c8c8;border-bottom:1px solid #c8c8c8"></div>
<div class="t" style="left:316px;top:34px;width:96px;overflow:hidden;font-size:11px;letter-spacing:-0.2px"></div>
<div class="a" style="left:413px;top:32px;width:80px;height:16px;background:#fff;border-right:1px solid #c8c8c8;border-bottom:1px solid #c8c8c8"></div>
<div class="t" style="left:416px;top:34px;width:76px;overflow:hidden;font-size:11px;letter-spacing:-0.2px"></div>
<div class="a" style="left:493px;top:32px;width:80px;height:16px;background:#fff;border-right:1px solid #c8c8c8;border-bottom:1px solid #c8c8c8"></div>
<div class="t" style="left:496px;top:34px;width:76px;overflow:hidden;font-size:11px;letter-spacing:-0.2px"></div>
<div class="a" style="left:0px;top:48px;width:20px;height:16px;background:#ece9d8;border-right:1px solid #c8c8c8;border-bottom:1px solid #c8c8c8"></div>
<div class="a" style="left:4px;top:50px;width:12px;height:12px;background:#fff;border:1px solid #555"></div>
<div class="a" style="left:20px;top:48px;width:53px;height:16px;background:#fff;border-right:1px solid #c8c8c8;border-bottom:1px solid #c8c8c8"></div>
<div class="t" style="left:20px;top:50px;width:49px;text-align:right;font-size:11px;letter-spacing:-0.2px">18080</div>
<div class="a" style="left:73px;top:48px;width:40px;height:16px;background:#fff;border-right:1px solid #c8c8c8;border-bottom:1px solid #c8c8c8"></div>
<div class="t" style="left:73px;top:50px;width:40px;text-align:center;font-size:11px;letter-spacing:-0.2px"></div>
<div class="a" style="left:113px;top:48px;width:200px;height:16px;background:#fff;border-right:1px solid #c8c8c8;border-bottom:1px solid #c8c8c8"></div>
<div class="t" style="left:116px;top:50px;width:196px;overflow:hidden;font-size:11px;letter-spacing:-0.2px">&nbsp;Bellapianta Giuseppe Foto Video Click</div>
<div class="a" style="left:313px;top:48px;width:100px;height:16px;background:#fff;border-right:1px solid #c8c8c8;border-bottom:1px solid #c8c8c8"></div>
<div class="t" style="left:316px;top:50px;width:96px;overflow:hidden;font-size:11px;letter-spacing:-0.2px"></div>
<div class="a" style="left:413px;top:48px;width:80px;height:16px;background:#fff;border-right:1px solid #c8c8c8;border-bottom:1px solid #c8c8c8"></div>
<div class="t" style="left:416px;top:50px;width:76px;overflow:hidden;font-size:11px;letter-spacing:-0.2px"></div>
<div class="a" style="left:493px;top:48px;width:80px;height:16px;background:#fff;border-right:1px solid #c8c8c8;border-bottom:1px solid #c8c8c8"></div>
<div class="t" style="left:496px;top:50px;width:76px;overflow:hidden;font-size:11px;letter-spacing:-0.2px"></div>
<div class="a" style="left:0px;top:64px;width:20px;height:16px;background:#ece9d8;border-right:1px solid #c8c8c8;border-bottom:1px solid #c8c8c8"></div>
<div class="a" style="left:4px;top:66px;width:12px;height:12px;background:#fff;border:1px solid #555"></div>
<div class="a" style="left:20px;top:64px;width:53px;height:16px;background:#fff;border-right:1px solid #c8c8c8;border-bottom:1px solid #c8c8c8"></div>
<div class="t" style="left:20px;top:66px;width:49px;text-align:right;font-size:11px;letter-spacing:-0.2px">5226</div>
<div class="a" style="left:73px;top:64px;width:40px;height:16px;background:#fff;border-right:1px solid #c8c8c8;border-bottom:1px solid #c8c8c8"></div>
<div class="t" style="left:73px;top:66px;width:40px;text-align:center;font-size:11px;letter-spacing:-0.2px"></div>
<div class="a" style="left:113px;top:64px;width:200px;height:16px;background:#fff;border-right:1px solid #c8c8c8;border-bottom:1px solid #c8c8c8"></div>
<div class="t" style="left:116px;top:66px;width:196px;overflow:hidden;font-size:11px;letter-spacing:-0.2px">&nbsp;damiano errico fotografo</div>
<div class="a" style="left:313px;top:64px;width:100px;height:16px;background:#fff;border-right:1px solid #c8c8c8;border-bottom:1px solid #c8c8c8"></div>
<div class="t" style="left:316px;top:66px;width:96px;overflow:hidden;font-size:11px;letter-spacing:-0.2px"></div>
<div class="a" style="left:413px;top:64px;width:80px;height:16px;background:#fff;border-right:1px solid #c8c8c8;border-bottom:1px solid #c8c8c8"></div>
<div class="t" style="left:416px;top:66px;width:76px;overflow:hidden;font-size:11px;letter-spacing:-0.2px"></div>
<div class="a" style="left:493px;top:64px;width:80px;height:16px;background:#fff;border-right:1px solid #c8c8c8;border-bottom:1px solid #c8c8c8"></div>
<div class="t" style="left:496px;top:66px;width:76px;overflow:hidden;font-size:11px;letter-spacing:-0.2px"></div>
<div class="a" style="left:0px;top:80px;width:20px;height:16px;background:#ece9d8;border-right:1px solid #c8c8c8;border-bottom:1px solid #c8c8c8"></div>
<div class="a" style="left:4px;top:82px;width:12px;height:12px;background:#fff;border:1px solid #555"></div>
<div class="a" style="left:20px;top:80px;width:53px;height:16px;background:#fff;border-right:1px solid #c8c8c8;border-bottom:1px solid #c8c8c8"></div>
<div class="t" style="left:20px;top:82px;width:49px;text-align:right;font-size:11px;letter-spacing:-0.2px">4280</div>
<div class="a" style="left:73px;top:80px;width:40px;height:16px;background:#fff;border-right:1px solid #c8c8c8;border-bottom:1px solid #c8c8c8"></div>
<div class="t" style="left:73px;top:82px;width:40px;text-align:center;font-size:11px;letter-spacing:-0.2px"></div>
<div class="a" style="left:113px;top:80px;width:200px;height:16px;background:#fff;border-right:1px solid #c8c8c8;border-bottom:1px solid #c8c8c8"></div>
<div class="t" style="left:116px;top:82px;width:196px;overflow:hidden;font-size:11px;letter-spacing:-0.2px">&nbsp;greco giovanni</div>
<div class="a" style="left:313px;top:80px;width:100px;height:16px;background:#fff;border-right:1px solid #c8c8c8;border-bottom:1px solid #c8c8c8"></div>
<div class="t" style="left:316px;top:82px;width:96px;overflow:hidden;font-size:11px;letter-spacing:-0.2px"></div>
<div class="a" style="left:413px;top:80px;width:80px;height:16px;background:#fff;border-right:1px solid #c8c8c8;border-bottom:1px solid #c8c8c8"></div>
<div class="t" style="left:416px;top:82px;width:76px;overflow:hidden;font-size:11px;letter-spacing:-0.2px"></div>
<div class="a" style="left:493px;top:80px;width:80px;height:16px;background:#fff;border-right:1px solid #c8c8c8;border-bottom:1px solid #c8c8c8"></div>
<div class="t" style="left:496px;top:82px;width:76px;overflow:hidden;font-size:11px;letter-spacing:-0.2px"></div>
<div class="a" style="left:0px;top:96px;width:20px;height:16px;background:#ece9d8;border-right:1px solid #c8c8c8;border-bottom:1px solid #c8c8c8"></div>
<div class="a" style="left:4px;top:98px;width:12px;height:12px;background:#fff;border:1px solid #555"></div>
<div class="a" style="left:20px;top:96px;width:53px;height:16px;background:#fff;border-right:1px solid #c8c8c8;border-bottom:1px solid #c8c8c8"></div>
<div class="t" style="left:20px;top:98px;width:49px;text-align:right;font-size:11px;letter-spacing:-0.2px">11894</div>
<div class="a" style="left:73px;top:96px;width:40px;height:16px;background:#fff;border-right:1px solid #c8c8c8;border-bottom:1px solid #c8c8c8"></div>
<div class="t" style="left:73px;top:98px;width:40px;text-align:center;font-size:11px;letter-spacing:-0.2px"></div>
<div class="a" style="left:113px;top:96px;width:200px;height:16px;background:#fff;border-right:1px solid #c8c8c8;border-bottom:1px solid #c8c8c8"></div>
<div class="t" style="left:116px;top:98px;width:196px;overflow:hidden;font-size:11px;letter-spacing:-0.2px">&nbsp;Ingrafika</div>
<div class="a" style="left:313px;top:96px;width:100px;height:16px;background:#fff;border-right:1px solid #c8c8c8;border-bottom:1px solid #c8c8c8"></div>
<div class="t" style="left:316px;top:98px;width:96px;overflow:hidden;font-size:11px;letter-spacing:-0.2px"></div>
<div class="a" style="left:413px;top:96px;width:80px;height:16px;background:#fff;border-right:1px solid #c8c8c8;border-bottom:1px solid #c8c8c8"></div>
<div class="t" style="left:416px;top:98px;width:76px;overflow:hidden;font-size:11px;letter-spacing:-0.2px"></div>
<div class="a" style="left:493px;top:96px;width:80px;height:16px;background:#fff;border-right:1px solid #c8c8c8;border-bottom:1px solid #c8c8c8"></div>
<div class="t" style="left:496px;top:98px;width:76px;overflow:hidden;font-size:11px;letter-spacing:-0.2px"></div>
<div class="a" style="left:0px;top:112px;width:20px;height:16px;background:#ece9d8;border-right:1px solid #c8c8c8;border-bottom:1px solid #c8c8c8"></div>
<div class="a" style="left:4px;top:114px;width:12px;height:12px;background:#fff;border:1px solid #555"></div>
<div class="a" style="left:20px;top:112px;width:53px;height:16px;background:#fff;border-right:1px solid #c8c8c8;border-bottom:1px solid #c8c8c8"></div>
<div class="t" style="left:20px;top:114px;width:49px;text-align:right;font-size:11px;letter-spacing:-0.2px">20236</div>
<div class="a" style="left:73px;top:112px;width:40px;height:16px;background:#fff;border-right:1px solid #c8c8c8;border-bottom:1px solid #c8c8c8"></div>
<div class="t" style="left:73px;top:114px;width:40px;text-align:center;font-size:11px;letter-spacing:-0.2px"></div>
<div class="a" style="left:113px;top:112px;width:200px;height:16px;background:#fff;border-right:1px solid #c8c8c8;border-bottom:1px solid #c8c8c8"></div>
<div class="t" style="left:116px;top:114px;width:196px;overflow:hidden;font-size:11px;letter-spacing:-0.2px">&nbsp;minen laura</div>
<div class="a" style="left:313px;top:112px;width:100px;height:16px;background:#fff;border-right:1px solid #c8c8c8;border-bottom:1px solid #c8c8c8"></div>
<div class="t" style="left:316px;top:114px;width:96px;overflow:hidden;font-size:11px;letter-spacing:-0.2px"></div>
<div class="a" style="left:413px;top:112px;width:80px;height:16px;background:#fff;border-right:1px solid #c8c8c8;border-bottom:1px solid #c8c8c8"></div>
<div class="t" style="left:416px;top:114px;width:76px;overflow:hidden;font-size:11px;letter-spacing:-0.2px"></div>
<div class="a" style="left:493px;top:112px;width:80px;height:16px;background:#fff;border-right:1px solid #c8c8c8;border-bottom:1px solid #c8c8c8"></div>
<div class="t" style="left:496px;top:114px;width:76px;overflow:hidden;font-size:11px;letter-spacing:-0.2px"></div>
<div class="a" style="left:0px;top:128px;width:20px;height:16px;background:#ece9d8;border-right:1px solid #c8c8c8;border-bottom:1px solid #c8c8c8"></div>
<div class="a" style="left:4px;top:130px;width:12px;height:12px;background:#fff;border:1px solid #555"></div>
<div class="a" style="left:20px;top:128px;width:53px;height:16px;background:#fff;border-right:1px solid #c8c8c8;border-bottom:1px solid #c8c8c8"></div>
<div class="t" style="left:20px;top:130px;width:49px;text-align:right;font-size:11px;letter-spacing:-0.2px">12214</div>
<div class="a" style="left:73px;top:128px;width:40px;height:16px;background:#fff;border-right:1px solid #c8c8c8;border-bottom:1px solid #c8c8c8"></div>
<div class="t" style="left:73px;top:130px;width:40px;text-align:center;font-size:11px;letter-spacing:-0.2px"></div>
<div class="a" style="left:113px;top:128px;width:200px;height:16px;background:#fff;border-right:1px solid #c8c8c8;border-bottom:1px solid #c8c8c8"></div>
<div class="t" style="left:116px;top:130px;width:196px;overflow:hidden;font-size:11px;letter-spacing:-0.2px">&nbsp;Mirabella Salvatore</div>
<div class="a" style="left:313px;top:128px;width:100px;height:16px;background:#fff;border-right:1px solid #c8c8c8;border-bottom:1px solid #c8c8c8"></div>
<div class="t" style="left:316px;top:130px;width:96px;overflow:hidden;font-size:11px;letter-spacing:-0.2px"></div>
<div class="a" style="left:413px;top:128px;width:80px;height:16px;background:#fff;border-right:1px solid #c8c8c8;border-bottom:1px solid #c8c8c8"></div>
<div class="t" style="left:416px;top:130px;width:76px;overflow:hidden;font-size:11px;letter-spacing:-0.2px"></div>
<div class="a" style="left:493px;top:128px;width:80px;height:16px;background:#fff;border-right:1px solid #c8c8c8;border-bottom:1px solid #c8c8c8"></div>
<div class="t" style="left:496px;top:130px;width:76px;overflow:hidden;font-size:11px;letter-spacing:-0.2px"></div>
<div class="a" style="left:0px;top:144px;width:20px;height:16px;background:#ece9d8;border-right:1px solid #c8c8c8;border-bottom:1px solid #c8c8c8"></div>
<div class="a" style="left:4px;top:146px;width:12px;height:12px;background:#fff;border:1px solid #555"></div>
<div class="a" style="left:20px;top:144px;width:53px;height:16px;background:#fff;border-right:1px solid #c8c8c8;border-bottom:1px solid #c8c8c8"></div>
<div class="t" style="left:20px;top:146px;width:49px;text-align:right;font-size:11px;letter-spacing:-0.2px">18320</div>
<div class="a" style="left:73px;top:144px;width:40px;height:16px;background:#fff;border-right:1px solid #c8c8c8;border-bottom:1px solid #c8c8c8"></div>
<div class="t" style="left:73px;top:146px;width:40px;text-align:center;font-size:11px;letter-spacing:-0.2px"></div>
<div class="a" style="left:113px;top:144px;width:200px;height:16px;background:#fff;border-right:1px solid #c8c8c8;border-bottom:1px solid #c8c8c8"></div>
<div class="t" style="left:116px;top:146px;width:196px;overflow:hidden;font-size:11px;letter-spacing:-0.2px">1..2..print srl</div>
<div class="a" style="left:313px;top:144px;width:100px;height:16px;background:#fff;border-right:1px solid #c8c8c8;border-bottom:1px solid #c8c8c8"></div>
<div class="t" style="left:316px;top:146px;width:96px;overflow:hidden;font-size:11px;letter-spacing:-0.2px"></div>
<div class="a" style="left:413px;top:144px;width:80px;height:16px;background:#fff;border-right:1px solid #c8c8c8;border-bottom:1px solid #c8c8c8"></div>
<div class="t" style="left:416px;top:146px;width:76px;overflow:hidden;font-size:11px;letter-spacing:-0.2px"></div>
<div class="a" style="left:493px;top:144px;width:80px;height:16px;background:#fff;border-right:1px solid #c8c8c8;border-bottom:1px solid #c8c8c8"></div>
<div class="t" style="left:496px;top:146px;width:76px;overflow:hidden;font-size:11px;letter-spacing:-0.2px"></div>
<div class="a" style="left:0px;top:160px;width:20px;height:16px;background:#ece9d8;border-right:1px solid #c8c8c8;border-bottom:1px solid #c8c8c8"></div>
<div class="a" style="left:4px;top:162px;width:12px;height:12px;background:#fff;border:1px solid #555"></div>
<div class="a" style="left:20px;top:160px;width:53px;height:16px;background:#fff;border-right:1px solid #c8c8c8;border-bottom:1px solid #c8c8c8"></div>
<div class="t" style="left:20px;top:162px;width:49px;text-align:right;font-size:11px;letter-spacing:-0.2px">5524</div>
<div class="a" style="left:73px;top:160px;width:40px;height:16px;background:#fff;border-right:1px solid #c8c8c8;border-bottom:1px solid #c8c8c8"></div>
<div class="t" style="left:73px;top:162px;width:40px;text-align:center;font-size:11px;letter-spacing:-0.2px"></div>
<div class="a" style="left:113px;top:160px;width:200px;height:16px;background:#fff;border-right:1px solid #c8c8c8;border-bottom:1px solid #c8c8c8"></div>
<div class="t" style="left:116px;top:162px;width:196px;overflow:hidden;font-size:11px;letter-spacing:-0.2px">12 print</div>
<div class="a" style="left:313px;top:160px;width:100px;height:16px;background:#fff;border-right:1px solid #c8c8c8;border-bottom:1px solid #c8c8c8"></div>
<div class="t" style="left:316px;top:162px;width:96px;overflow:hidden;font-size:11px;letter-spacing:-0.2px"></div>
<div class="a" style="left:413px;top:160px;width:80px;height:16px;background:#fff;border-right:1px solid #c8c8c8;border-bottom:1px solid #c8c8c8"></div>
<div class="t" style="left:416px;top:162px;width:76px;overflow:hidden;font-size:11px;letter-spacing:-0.2px"></div>
<div class="a" style="left:493px;top:160px;width:80px;height:16px;background:#fff;border-right:1px solid #c8c8c8;border-bottom:1px solid #c8c8c8"></div>
<div class="t" style="left:496px;top:162px;width:76px;overflow:hidden;font-size:11px;letter-spacing:-0.2px"></div>
<div class="a" style="left:0px;top:176px;width:20px;height:16px;background:#ece9d8;border-right:1px solid #c8c8c8;border-bottom:1px solid #c8c8c8"></div>
<div class="a" style="left:4px;top:178px;width:12px;height:12px;background:#fff;border:1px solid #555"></div>
<div class="a" style="left:20px;top:176px;width:53px;height:16px;background:#fff;border-right:1px solid #c8c8c8;border-bottom:1px solid #c8c8c8"></div>
<div class="t" style="left:20px;top:178px;width:49px;text-align:right;font-size:11px;letter-spacing:-0.2px">20018</div>
<div class="a" style="left:73px;top:176px;width:40px;height:16px;background:#fff;border-right:1px solid #c8c8c8;border-bottom:1px solid #c8c8c8"></div>
<div class="t" style="left:73px;top:178px;width:40px;text-align:center;font-size:11px;letter-spacing:-0.2px"></div>
<div class="a" style="left:113px;top:176px;width:200px;height:16px;background:#fff;border-right:1px solid #c8c8c8;border-bottom:1px solid #c8c8c8"></div>
<div class="t" style="left:116px;top:178px;width:196px;overflow:hidden;font-size:11px;letter-spacing:-0.2px">2m di Murciano Mauro snc</div>
<div class="a" style="left:313px;top:176px;width:100px;height:16px;background:#fff;border-right:1px solid #c8c8c8;border-bottom:1px solid #c8c8c8"></div>
<div class="t" style="left:316px;top:178px;width:96px;overflow:hidden;font-size:11px;letter-spacing:-0.2px"></div>
<div class="a" style="left:413px;top:176px;width:80px;height:16px;background:#fff;border-right:1px solid #c8c8c8;border-bottom:1px solid #c8c8c8"></div>
<div class="t" style="left:416px;top:178px;width:76px;overflow:hidden;font-size:11px;letter-spacing:-0.2px"></div>
<div class="a" style="left:493px;top:176px;width:80px;height:16px;background:#fff;border-right:1px solid #c8c8c8;border-bottom:1px solid #c8c8c8"></div>
<div class="t" style="left:496px;top:178px;width:76px;overflow:hidden;font-size:11px;letter-spacing:-0.2px"></div>
<div class="a" style="left:0px;top:192px;width:20px;height:16px;background:#ece9d8;border-right:1px solid #c8c8c8;border-bottom:1px solid #c8c8c8"></div>
<div class="a" style="left:4px;top:194px;width:12px;height:12px;background:#fff;border:1px solid #555"></div>
<div class="a" style="left:20px;top:192px;width:53px;height:16px;background:#fff;border-right:1px solid #c8c8c8;border-bottom:1px solid #c8c8c8"></div>
<div class="t" style="left:20px;top:194px;width:49px;text-align:right;font-size:11px;letter-spacing:-0.2px">12086</div>
<div class="a" style="left:73px;top:192px;width:40px;height:16px;background:#fff;border-right:1px solid #c8c8c8;border-bottom:1px solid #c8c8c8"></div>
<div class="t" style="left:73px;top:194px;width:40px;text-align:center;font-size:11px;letter-spacing:-0.2px"></div>
<div class="a" style="left:113px;top:192px;width:200px;height:16px;background:#fff;border-right:1px solid #c8c8c8;border-bottom:1px solid #c8c8c8"></div>
<div class="t" style="left:116px;top:194px;width:196px;overflow:hidden;font-size:11px;letter-spacing:-0.2px">3D creations</div>
<div class="a" style="left:313px;top:192px;width:100px;height:16px;background:#fff;border-right:1px solid #c8c8c8;border-bottom:1px solid #c8c8c8"></div>
<div class="t" style="left:316px;top:194px;width:96px;overflow:hidden;font-size:11px;letter-spacing:-0.2px"></div>
<div class="a" style="left:413px;top:192px;width:80px;height:16px;background:#fff;border-right:1px solid #c8c8c8;border-bottom:1px solid #c8c8c8"></div>
<div class="t" style="left:416px;top:194px;width:76px;overflow:hidden;font-size:11px;letter-spacing:-0.2px"></div>
<div class="a" style="left:493px;top:192px;width:80px;height:16px;background:#fff;border-right:1px solid #c8c8c8;border-bottom:1px solid #c8c8c8"></div>
<div class="t" style="left:496px;top:194px;width:76px;overflow:hidden;font-size:11px;letter-spacing:-0.2px"></div>
<div class="a" style="left:0px;top:208px;width:20px;height:16px;background:#ece9d8;border-right:1px solid #c8c8c8;border-bottom:1px solid #c8c8c8"></div>
<div class="a" style="left:4px;top:210px;width:12px;height:12px;background:#fff;border:1px solid #555"></div>
<div class="a" style="left:20px;top:208px;width:53px;height:16px;background:#fff;border-right:1px solid #c8c8c8;border-bottom:1px solid #c8c8c8"></div>
<div class="t" style="left:20px;top:210px;width:49px;text-align:right;font-size:11px;letter-spacing:-0.2px">18588</div>
<div class="a" style="left:73px;top:208px;width:40px;height:16px;background:#fff;border-right:1px solid #c8c8c8;border-bottom:1px solid #c8c8c8"></div>
<div class="t" style="left:73px;top:210px;width:40px;text-align:center;font-size:11px;letter-spacing:-0.2px"></div>
<div class="a" style="left:113px;top:208px;width:200px;height:16px;background:#fff;border-right:1px solid #c8c8c8;border-bottom:1px solid #c8c8c8"></div>
<div class="t" style="left:116px;top:210px;width:196px;overflow:hidden;font-size:11px;letter-spacing:-0.2px">3mdigital sas</div>
<div class="a" style="left:313px;top:208px;width:100px;height:16px;background:#fff;border-right:1px solid #c8c8c8;border-bottom:1px solid #c8c8c8"></div>
<div class="t" style="left:316px;top:210px;width:96px;overflow:hidden;font-size:11px;letter-spacing:-0.2px"></div>
<div class="a" style="left:413px;top:208px;width:80px;height:16px;background:#fff;border-right:1px solid #c8c8c8;border-bottom:1px solid #c8c8c8"></div>
<div class="t" style="left:416px;top:210px;width:76px;overflow:hidden;font-size:11px;letter-spacing:-0.2px"></div>
<div class="a" style="left:493px;top:208px;width:80px;height:16px;background:#fff;border-right:1px solid #c8c8c8;border-bottom:1px solid #c8c8c8"></div>
<div class="t" style="left:496px;top:210px;width:76px;overflow:hidden;font-size:11px;letter-spacing:-0.2px"></div>
<div class="a" style="left:0px;top:224px;width:20px;height:16px;background:#ece9d8;border-right:1px solid #c8c8c8;border-bottom:1px solid #c8c8c8"></div>
<div class="a" style="left:4px;top:226px;width:12px;height:12px;background:#fff;border:1px solid #555"></div>
<div class="a" style="left:20px;top:224px;width:53px;height:16px;background:#fff;border-right:1px solid #c8c8c8;border-bottom:1px solid #c8c8c8"></div>
<div class="t" style="left:20px;top:226px;width:49px;text-align:right;font-size:11px;letter-spacing:-0.2px">11910</div>
<div class="a" style="left:73px;top:224px;width:40px;height:16px;background:#fff;border-right:1px solid #c8c8c8;border-bottom:1px solid #c8c8c8"></div>
<div class="t" style="left:73px;top:226px;width:40px;text-align:center;font-size:11px;letter-spacing:-0.2px"></div>
<div class="a" style="left:113px;top:224px;width:200px;height:16px;background:#fff;border-right:1px solid #c8c8c8;border-bottom:1px solid #c8c8c8"></div>
<div class="t" style="left:116px;top:226px;width:196px;overflow:hidden;font-size:11px;letter-spacing:-0.2px">3wlab</div>
<div class="a" style="left:313px;top:224px;width:100px;height:16px;background:#fff;border-right:1px solid #c8c8c8;border-bottom:1px solid #c8c8c8"></div>
<div class="t" style="left:316px;top:226px;width:96px;overflow:hidden;font-size:11px;letter-spacing:-0.2px"></div>
<div class="a" style="left:413px;top:224px;width:80px;height:16px;background:#fff;border-right:1px solid #c8c8c8;border-bottom:1px solid #c8c8c8"></div>
<div class="t" style="left:416px;top:226px;width:76px;overflow:hidden;font-size:11px;letter-spacing:-0.2px"></div>
<div class="a" style="left:493px;top:224px;width:80px;height:16px;background:#fff;border-right:1px solid #c8c8c8;border-bottom:1px solid #c8c8c8"></div>
<div class="t" style="left:496px;top:226px;width:76px;overflow:hidden;font-size:11px;letter-spacing:-0.2px"></div>
<div class="a" style="left:0px;top:240px;width:20px;height:16px;background:#ece9d8;border-right:1px solid #c8c8c8;border-bottom:1px solid #c8c8c8"></div>
<div class="a" style="left:4px;top:242px;width:12px;height:12px;background:#fff;border:1px solid #555"></div>
<div class="a" style="left:20px;top:240px;width:53px;height:16px;background:#fff;border-right:1px solid #c8c8c8;border-bottom:1px solid #c8c8c8"></div>
<div class="t" style="left:20px;top:242px;width:49px;text-align:right;font-size:11px;letter-spacing:-0.2px">18226</div>
<div class="a" style="left:73px;top:240px;width:40px;height:16px;background:#fff;border-right:1px solid #c8c8c8;border-bottom:1px solid #c8c8c8"></div>
<div class="t" style="left:73px;top:242px;width:40px;text-align:center;font-size:11px;letter-spacing:-0.2px"></div>
<div class="a" style="left:113px;top:240px;width:200px;height:16px;background:#fff;border-right:1px solid #c8c8c8;border-bottom:1px solid #c8c8c8"></div>
<div class="t" style="left:116px;top:242px;width:196px;overflow:hidden;font-size:11px;letter-spacing:-0.2px">A.D.FOTOGRAFIA di Antonio De Fa</div>
<div class="a" style="left:313px;top:240px;width:100px;height:16px;background:#fff;border-right:1px solid #c8c8c8;border-bottom:1px solid #c8c8c8"></div>
<div class="t" style="left:316px;top:242px;width:96px;overflow:hidden;font-size:11px;letter-spacing:-0.2px"></div>
<div class="a" style="left:413px;top:240px;width:80px;height:16px;background:#fff;border-right:1px solid #c8c8c8;border-bottom:1px solid #c8c8c8"></div>
<div class="t" style="left:416px;top:242px;width:76px;overflow:hidden;font-size:11px;letter-spacing:-0.2px"></div>
<div class="a" style="left:493px;top:240px;width:80px;height:16px;background:#fff;border-right:1px solid #c8c8c8;border-bottom:1px solid #c8c8c8"></div>
<div class="t" style="left:496px;top:242px;width:76px;overflow:hidden;font-size:11px;letter-spacing:-0.2px"></div>
<div class="a" style="left:0px;top:256px;width:20px;height:16px;background:#ece9d8;border-right:1px solid #c8c8c8;border-bottom:1px solid #c8c8c8"></div>
<div class="a" style="left:4px;top:258px;width:12px;height:12px;background:#fff;border:1px solid #555"></div>
<div class="a" style="left:20px;top:256px;width:53px;height:16px;background:#fff;border-right:1px solid #c8c8c8;border-bottom:1px solid #c8c8c8"></div>
<div class="t" style="left:20px;top:258px;width:49px;text-align:right;font-size:11px;letter-spacing:-0.2px">13215</div>
<div class="a" style="left:73px;top:256px;width:40px;height:16px;background:#fff;border-right:1px solid #c8c8c8;border-bottom:1px solid #c8c8c8"></div>
<div class="t" style="left:73px;top:258px;width:40px;text-align:center;font-size:11px;letter-spacing:-0.2px">Cam</div>
<div class="a" style="left:113px;top:256px;width:200px;height:16px;background:#fff;border-right:1px solid #c8c8c8;border-bottom:1px solid #c8c8c8"></div>
<div class="t" style="left:116px;top:258px;width:196px;overflow:hidden;font-size:11px;letter-spacing:-0.2px">A.G.I. di Abagnale Gianluca</div>
<div class="a" style="left:313px;top:256px;width:100px;height:16px;background:#fff;border-right:1px solid #c8c8c8;border-bottom:1px solid #c8c8c8"></div>
<div class="t" style="left:316px;top:258px;width:96px;overflow:hidden;font-size:11px;letter-spacing:-0.2px"></div>
<div class="a" style="left:413px;top:256px;width:80px;height:16px;background:#fff;border-right:1px solid #c8c8c8;border-bottom:1px solid #c8c8c8"></div>
<div class="t" style="left:416px;top:258px;width:76px;overflow:hidden;font-size:11px;letter-spacing:-0.2px"></div>
<div class="a" style="left:493px;top:256px;width:80px;height:16px;background:#fff;border-right:1px solid #c8c8c8;border-bottom:1px solid #c8c8c8"></div>
<div class="t" style="left:496px;top:258px;width:76px;overflow:hidden;font-size:11px;letter-spacing:-0.2px"></div>
</div>
<div class="a" style="left:1266px;top:279px;width:20px;height:16px;background:#ece9d8"></div>
<div class="a" style="left:1269px;top:280px;width:17px;height:15px;background:linear-gradient(#f8f8f8,#dcdcdc);border:1px solid #a0a0a0;border-radius:2px"></div>
<div class="a" style="left:693px;top:543px;width:592px;height:16px;background:linear-gradient(#f4f4f4,#dcdcdc);border-top:1px solid #c8c8c8"></div>
<div class="a" style="left:693px;top:543px;width:16px;height:16px;background:linear-gradient(#f8f8f8,#dadada);border:1px solid #a8a8a8;border-radius:2px"></div>
<svg class="a" style="left:697px;top:547px" width="6" height="9" viewBox="0 0 6 9"><path d="M5.5 0.5V8.5L0.5 4.5Z" fill="#111"/></svg>
<div class="btn" style="left:694px;top:566px;width:98px;height:71px;border:2px solid #222;box-shadow:inset 1px 1px 0 #fff"></div>
<div class="t" style="left:694px;top:608px;width:98px;text-align:center;font-size:11px;letter-spacing:-0.2px">Aggiungi</div>
<div class="t" style="left:694px;top:621px;width:98px;text-align:center;font-size:11px;letter-spacing:-0.2px">anagrafica (F4)</div>
<svg class="a" style="left:733px;top:581px" width="28" height="22" viewBox="0 0 28 22">
<defs><linearGradient id="ag" x1="0" y1="0" x2="0" y2="1"><stop offset="0" stop-color="#70a8f0"/><stop offset="1" stop-color="#2a60c8"/></linearGradient></defs>
<rect x="1" y="1" width="17" height="11" rx="1.5" fill="url(#ag)" stroke="#1a3a98" stroke-width="1"/>
<path d="M17 7 H21 V11 H25 V15 H21 V19 H17 V15 H13 V11 H17Z" fill="#58d040" stroke="#18a010" stroke-width="1"/>
</svg>
<div class="btn" style="left:795px;top:566px;width:97px;height:71px;"></div>
<div class="t" style="left:795px;top:608px;width:97px;text-align:center;font-size:11px;letter-spacing:-0.2px">Rimuovi anagr.</div>
<div class="t" style="left:795px;top:621px;width:97px;text-align:center;font-size:11px;letter-spacing:-0.2px">dalla lista</div>
<svg class="a" style="left:828px;top:572px" width="30" height="30" viewBox="0 0 30 30">
<path d="M3 5 L9 2 L15 11 L22 2 L28 6 L19 15 L27 25 L21 29 L15 20 L8 28 L2 24 L10 15Z" fill="#ef4a28" stroke="#c02a10" stroke-width="1"/>
</svg>
<div class="btn" style="left:894px;top:566px;width:98px;height:71px;"></div>
<div class="t" style="left:894px;top:608px;width:98px;text-align:center;font-size:11px;letter-spacing:-0.2px">Aggiungi indirizzo</div>
<div class="t" style="left:894px;top:621px;width:98px;text-align:center;font-size:11px;letter-spacing:-0.2px">email</div>
<svg class="a" style="left:927px;top:570px" width="32" height="34" viewBox="0 0 32 34">
<defs><linearGradient id="atg" x1="0" y1="0" x2="1" y2="1"><stop offset="0" stop-color="#ffffff"/><stop offset="0.45" stop-color="#c0c0f4"/><stop offset="1" stop-color="#6868c0"/></linearGradient></defs>
<g fill="none" stroke-linecap="round">
<path d="M26 27 A12.5 13.5 0 1 1 28.5 16 Q28.5 23 23.5 23 Q20.5 23 20.5 19 V9" stroke="#4a4aa0" stroke-width="6"/>
<path d="M26 27 A12.5 13.5 0 1 1 28.5 16 Q28.5 23 23.5 23 Q20.5 23 20.5 19 V9" stroke="url(#atg)" stroke-width="4"/>
<ellipse cx="15.5" cy="15.5" rx="4.8" ry="6.5" stroke="#4a4aa0" stroke-width="5.5"/>
<ellipse cx="15.5" cy="15.5" rx="4.8" ry="6.5" stroke="url(#atg)" stroke-width="3.5"/>
</g>
</svg>
<div class="a" style="left:978px;top:287px;width:837px;height:597px;background:#c0fac0;border:1px solid #3f5670;border-top:none;border-bottom:2px solid #5a6e86"></div>
<div class="a" style="left:979px;top:314px;width:3px;height:569px;background:#eeeeee"></div>
<div class="a" style="left:1811px;top:314px;width:3px;height:569px;background:#eeeeee"></div>
<div class="a" style="left:978px;top:287px;width:837px;height:27px;background:linear-gradient(#698db6,#8aa9cd);border:1px solid #3f5670;border-bottom:none;border-radius:5px 5px 0 0"></div>
<div class="t" style="left:1291px;top:297px;width:162px;text-align:center;font-size:12.5px;font-weight:bold;color:#ececec;text-shadow:1px 1px 0 #555,0 0 1px #333;line-height:14px">Lista contatti</div>
<svg class="a" style="left:983px;top:292px" width="18" height="16" viewBox="0 0 18 16">
<circle cx="11" cy="3.5" r="3" fill="#ffee20" stroke="#222" stroke-width="0.8"/>
<path d="M8 7 H14 V12 H8Z" fill="#b0b0b0" stroke="#222" stroke-width="0.8"/>
<path d="M1 9 L8 8 L9 14 L2 15Z" fill="#ffee20" stroke="#222" stroke-width="0.8"/>
<path d="M8 11 L14 9 L15 13 L9 15Z" fill="#909090" stroke="#1a8a1a" stroke-width="0.8"/>
<circle cx="7" cy="13" r="1.2" fill="#e02020"/>
</svg>
<div class="tbtn" style="left:1743px;top:293px"></div>
<div class="tbtn" style="left:1766px;top:293px"></div>
<div class="tbtn" style="left:1789px;top:293px"></div>
<div class="a" style="left:1748px;top:303px;width:10px;height:3px;background:#fff"></div>
<div class="a" style="left:1770px;top:299px;width:11px;height:9px;border:2px solid #fff;border-top-width:2px;background:#7f9dc2"></div>
<svg class="a" style="left:1793px;top:297px" width="11" height="11" viewBox="0 0 11 11"><path d="M1.5 1.5L9.5 9.5M9.5 1.5L1.5 9.5" stroke="#fff" stroke-width="2.4"/></svg>
<div class="a" style="left:982px;top:314px;width:829px;height:38px;background:linear-gradient(90deg,#ffffff 0,#ffffff 35%,#e2fbe2 58%,#c6fac6 85%,#c2fac2 100%);border-bottom:1px solid #a8a8a8"></div>
<svg class="a" style="left:986px;top:320px" width="40" height="26" viewBox="0 0 40 26">
<path d="M1.5 9 C1 4 6 2.5 11 3 C16 3 20 5 19.5 10 C19 16 17 23 13.5 23.5 C9 24 2 15 1.5 9Z" fill="#c83424"/>
<path d="M18.5 10 C18.5 5 23 3.5 28 4 C33 4.5 36 7 35.5 12 C35 17 32 22.5 28 22.5 C23 22.5 18.5 16 18.5 10Z" fill="#c02e1e"/>
<path d="M17.5 9 C19 13 19 18 17 22" stroke="#8a1a10" stroke-width="1" fill="none" opacity="0.6"/>
<path d="M3 3.5 L5.5 1.5 L7 3 L9.5 0.5 L11 2.5 L8 4.5 L4.5 5Z" fill="#4a8a2a"/>
<path d="M26 4 L29 1 L31 3.5 L34 2.5 L33.5 6 L37 8 L33 9 L31 11 L29 7 L26 6Z" fill="#6a9a38"/>
<g fill="#e86a40" opacity="0.8"><circle cx="6" cy="9" r="0.7"/><circle cx="10" cy="12" r="0.7"/><circle cx="14" cy="9" r="0.7"/><circle cx="8" cy="16" r="0.7"/><circle cx="12" cy="19" r="0.7"/><circle cx="23" cy="10" r="0.7"/><circle cx="27" cy="14" r="0.7"/><circle cx="24" cy="18" r="0.7"/><circle cx="30" cy="17" r="0.7"/></g>
</svg>
<div class="t" style="left:1035px;top:322px;font-size:16px;font-weight:bold;line-height:19px">Lista contatti</div>
<svg class="a" style="left:1767px;top:316px" width="36" height="33" viewBox="0 0 36 33">
<g stroke="#111" stroke-width="0.9">
<path d="M18.5 27 C18.5 19 21 16 26 16 C31 16 33.5 19 33.5 26 L32 27.5 H19.5Z" fill="#3cc83c"/>
<ellipse cx="25" cy="9.5" rx="6" ry="7.5" fill="#ffc890"/>
<path d="M19 9 C18.5 2 31 0.5 31.2 8.5 C29 5.5 21.5 5.5 19 9Z" fill="#d8a810"/>
<path d="M12.5 29 C12.5 23 14 21 17 21 C20 21 22 23 22 28 L20.5 29.5Z" fill="#d8401a"/>
<ellipse cx="17" cy="17" rx="4.2" ry="5" fill="#ffc080"/>
<path d="M12.5 15.5 C12.5 11 20 10.5 21 14 C19 12.5 14.5 12.5 12.5 15.5Z" fill="#c89810"/>
<path d="M2.5 30.5 C2.5 24 5 22 9.5 22 C14 22 16.5 24 16.5 30 L15 31.5 H4Z" fill="#f4cc18"/>
<ellipse cx="9.5" cy="18" rx="5" ry="5" fill="#c88a10"/>
<path d="M4 17.5 C4 11.5 15 11.5 15 16.5 C13 14.5 6.5 14.5 4 17.5Z" fill="#222"/>
</g>
</svg>
<div class="a" style="left:984px;top:355px;width:259px;height:147px;background:#ece9d8"></div>
<div class="a" style="left:1246px;top:397px;width:160px;height:105px;background:#ece9d8"></div>
<div class="a" style="left:1410px;top:355px;width:203px;height:147px;background:#ece9d8"></div>
<div class="a" style="left:1617px;top:355px;width:186px;height:147px;background:#ece9d8"></div>
<div class="grp" style="left:984px;top:362px;width:259px;height:34px"></div>
<div class="grpl" style="left:989px;top:356px;background:#ece9d8">Ricerca per codice o ragione sociale (F3)</div>
<div class="a" style="left:990px;top:371px;width:247px;height:19px;background:#fff;border:1px solid #9c9c9c"></div>
<div class="btn" style="left:1246px;top:361px;width:161px;height:35px;border:2px solid #b8b8c0;border-right-color:#8a8a98;border-bottom-color:#8a8a98"></div>
<svg class="a" style="left:1249px;top:369px" width="25" height="16" viewBox="0 0 25 16">
<defs><radialGradient id="bl1249" cx="0.4" cy="0.3" r="0.7"><stop offset="0" stop-color="#f0f8ff"/><stop offset="1" stop-color="#7ab8f8"/></radialGradient></defs>
<path d="M1.5 3.5 Q4 1 10 1.5 L17 4 L21 6 L23.5 9.5 Q23.5 13.5 20.5 13.5 Q17.5 13 15.5 11.5 Q14.5 15 11.5 15 Q9 14.5 8 11.5 L1.5 5.5Z" fill="#3a3a3a"/>
<path d="M3 4 Q6 2.5 10 2.8 L15.5 4.8 L11 6.3 L4 5.5Z" fill="#a0a0a0"/>
<path d="M6 6.3 L10.5 6.3 L12.2 7.8 L9.2 10.2Z" fill="#e4e4e4"/>
<path d="M14.5 5.8 L18.8 5.6 L20 7 L17 8.6Z" fill="#e4e4e4"/>
<ellipse cx="11.6" cy="10.6" rx="2.5" ry="3.3" fill="url(#bl1249)" stroke="#2a2a2a" stroke-width="0.7"/>
<ellipse cx="19.9" cy="9.2" rx="2.4" ry="3.2" fill="url(#bl1249)" stroke="#2a2a2a" stroke-width="0.7"/>
</svg>
<div class="t" style="left:1285px;top:372px;width:110px;text-align:center;font-size:11px;letter-spacing:-0.2px">Esegui ricerca</div>
<div class="grp" style="left:984px;top:404px;width:259px;height:96px"></div>
<div class="grpl" style="left:989px;top:398px;background:#ece9d8">Altre ricerche</div>
<div class="t" style="left:999px;top:415px;font-size:11px;letter-spacing:-0.2px">Generica :</div>
<div class="a" style="left:1052px;top:413px;width:99px;height:19px;background:#fff;border:1px solid #9c9c9c"></div>
<div class="t" style="left:1001px;top:437px;font-size:11px;letter-spacing:-0.2px">Indirizzo :</div>
<div class="a" style="left:1052px;top:435px;width:99px;height:19px;background:#fff;border:1px solid #9c9c9c"></div>
<div class="t" style="left:1016px;top:459px;font-size:11px;letter-spacing:-0.2px">Citta' :</div>
<div class="a" style="left:1052px;top:457px;width:99px;height:19px;background:#fff;border:1px solid #9c9c9c"></div>
<div class="t" style="left:993px;top:481px;font-size:11px;letter-spacing:-0.2px">Cod. alternativo :</div>
<div class="a" style="left:1082px;top:479px;width:69px;height:19px;background:#fff;border:1px solid #9c9c9c"></div>
<div class="t" style="left:1159px;top:415px;font-size:11px;letter-spacing:-0.2px">Prov. :</div>
<div class="a" style="left:1196px;top:413px;width:43px;height:19px;background:#fff;border:1px solid #9c9c9c"></div>
<div class="t" style="left:1163px;top:437px;font-size:11px;letter-spacing:-0.2px">Naz. :</div>
<div class="a" style="left:1196px;top:435px;width:43px;height:19px;background:#fff;border:1px solid #9c9c9c"></div>
<div class="t" style="left:1161px;top:459px;font-size:11px;letter-spacing:-0.2px">Zona :</div>
<div class="a" style="left:1196px;top:457px;width:43px;height:19px;background:#fff;border:1px solid #9c9c9c"></div>
<div class="grp" style="left:1247px;top:404px;width:158px;height:70px"></div>
<div class="grpl" style="left:1252px;top:398px;background:#ece9d8">Opzioni di ricerca</div>
<div class="cb" style="left:1252px;top:414px"></div>
<svg class="a" style="left:1254px;top:416px" width="9" height="9" viewBox="0 0 9 9"><path d="M1 4.5L3.5 7L8 1.5" fill="none" stroke="#21a121" stroke-width="2"/></svg>
<div class="t" style="left:1267px;top:414px;font-size:11px;letter-spacing:-0.2px">Aggiorn. automatico</div>
<div class="cb" style="left:1252px;top:430px"></div>
<svg class="a" style="left:1254px;top:432px" width="9" height="9" viewBox="0 0 9 9"><path d="M1 4.5L3.5 7L8 1.5" fill="none" stroke="#21a121" stroke-width="2"/></svg>
<div class="t" style="left:1267px;top:430px;font-size:11px;letter-spacing:-0.2px">Solo anagrafiche attive</div>
<div class="btn" style="left:1252px;top:448px;width:147px;height:20px;"></div>
<div class="t" style="left:1252px;top:451px;width:147px;text-align:center;font-size:11px;letter-spacing:-0.2px">Filtri avanzati</div>
<div class="grp" style="left:1247px;top:479px;width:158px;height:22px"></div>
<div class="cb" style="left:1252px;top:484px"></div>
<div class="t" style="left:1267px;top:484px;font-size:11px;letter-spacing:-0.2px">Dettaglio contatti (F5)</div>
<div class="grp" style="left:1411px;top:362px;width:201px;height:139px"></div>
<div class="grpl" style="left:1416px;top:356px;background:#ece9d8">Categoria</div>
<div class="a" style="left:1416px;top:371px;width:189px;height:125px;background:#f9f9f9;border:1px solid #9c9c9c;border-right-color:#d8d8d8;border-bottom-color:#d8d8d8"></div>
<svg class="a" style="left:1419px;top:373px" width="14" height="16" viewBox="0 0 14 16">
<path d="M0.8 6.5 C0.8 3.8 4 3.2 7 3.6 C10 3.2 13.2 3.8 13.2 6.5 C13.2 10.5 9.2 15.6 7 15.6 C4.8 15.6 0.8 10.5 0.8 6.5Z" fill="#c8261e"/>
<path d="M2.5 6 C3 4.8 5 4.5 6 4.8" stroke="#e86050" stroke-width="0.9" fill="none"/>
<g fill="#8a1010"><circle cx="4" cy="8" r="0.4"/><circle cx="7" cy="9" r="0.4"/><circle cx="10" cy="8" r="0.4"/><circle cx="5.5" cy="11.5" r="0.4"/><circle cx="8.5" cy="11.5" r="0.4"/></g>
<path d="M2.5 4.2 L3.5 1.5 L5 3.2 L6.5 0.5 L8 3 L9.5 1 L10.5 3.2 L12 2 L11.5 4.5 L7 5 Z" fill="#3f7f22"/>
</svg>
<div class="t" style="left:1437px;top:374px;font-size:10.5px;letter-spacing:-0.3px;background:#d9d9d9;padding:0 2px;line-height:15px">Tutte le categorie</div>
<div class="a" style="left:1426px;top:389px;width:1px;height:56px;border-left:1px dotted #a0a0a0"></div>
<div class="a" style="left:1427px;top:396px;width:9px;height:1px;border-top:1px dotted #a0a0a0"></div>
<svg class="a" style="left:1436px;top:388px" width="17" height="15" viewBox="0 0 17 15">
<circle cx="11.5" cy="4" r="3" fill="#f8c080" stroke="#806020" stroke-width="0.5"/>
<path d="M7 14 C7 8 16 8 16 14Z" fill="#30a030"/>
<circle cx="5" cy="5" r="3" fill="#c07040" stroke="#333" stroke-width="0.5"/>
<path d="M1 14 C1 8 10 8 10 14Z" fill="#3060c0"/>
</svg>
<div class="t" style="left:1456px;top:389px;font-size:10.5px;letter-spacing:-0.3px;background:#fff;padding:0 2px;line-height:15px">Cliente</div>
<div class="a" style="left:1427px;top:412px;width:9px;height:1px;border-top:1px dotted #a0a0a0"></div>
<svg class="a" style="left:1436px;top:404px" width="17" height="15" viewBox="0 0 17 15">
<circle cx="11.5" cy="4" r="3" fill="#f8c080" stroke="#806020" stroke-width="0.5"/>
<path d="M7 14 C7 8 16 8 16 14Z" fill="#30a030"/>
<circle cx="5" cy="5" r="3" fill="#c07040" stroke="#333" stroke-width="0.5"/>
<path d="M1 14 C1 8 10 8 10 14Z" fill="#3060c0"/>
</svg>
<div class="t" style="left:1456px;top:405px;font-size:10.5px;letter-spacing:-0.3px;background:#fff;padding:0 2px;line-height:15px">Cliente Vip</div>
<div class="a" style="left:1427px;top:428px;width:9px;height:1px;border-top:1px dotted #a0a0a0"></div>
<svg class="a" style="left:1436px;top:420px" width="17" height="15" viewBox="0 0 17 15">
<circle cx="11.5" cy="4" r="3" fill="#f8c080" stroke="#806020" stroke-width="0.5"/>
<path d="M7 14 C7 8 16 8 16 14Z" fill="#30a030"/>
<circle cx="5" cy="5" r="3" fill="#c07040" stroke="#333" stroke-width="0.5"/>
<path d="M1 14 C1 8 10 8 10 14Z" fill="#3060c0"/>
</svg>
<div class="t" style="left:1456px;top:421px;font-size:10.5px;letter-spacing:-0.3px;background:#fff;padding:0 2px;line-height:15px">Rivenditore</div>
<div class="a" style="left:1427px;top:444px;width:9px;height:1px;border-top:1px dotted #a0a0a0"></div>
<svg class="a" style="left:1436px;top:436px" width="17" height="15" viewBox="0 0 17 15">
<circle cx="11.5" cy="4" r="3" fill="#f8c080" stroke="#806020" stroke-width="0.5"/>
<path d="M7 14 C7 8 16 8 16 14Z" fill="#30a030"/>
<circle cx="5" cy="5" r="3" fill="#c07040" stroke="#333" stroke-width="0.5"/>
<path d="M1 14 C1 8 10 8 10 14Z" fill="#3060c0"/>
</svg>
<div class="t" style="left:1456px;top:437px;font-size:10.5px;letter-spacing:-0.3px;background:#fff;padding:0 2px;line-height:15px">Distributore</div>
<div class="grp" style="left:1618px;top:362px;width:184px;height:139px"></div>
<div class="grpl" style="left:1624px;top:356px;background:#ece9d8">Visualizzazione</div>
<div class="a" style="left:1624px;top:373px;width:173px;height:121px;background:#fff;border:1px solid #828790"></div>
<div class="a" style="left:1626px;top:375px;width:169px;height:13px;background:#3399ff"></div>
<div class="t" style="left:1627px;top:375px;color:#fff;font-size:11px;letter-spacing:-0.2px">Default</div>
<div class="a" style="left:986px;top:503px;width:817px;height:265px;background:#fff;border:1px solid #111;border-top-width:1px;overflow:hidden">
<div class="a" style="left:0px;top:0px;width:20px;height:16px;background:#ece9d8;border-right:1px solid #c9c6b5;box-shadow:inset -1px 0 0 #fff"></div>
<div class="a" style="left:4px;top:2px;width:12px;height:12px;background:#fff;border:1px solid #555"></div>
<div class="a" style="left:20px;top:0px;width:53px;height:16px;background:#ece9d8;border-right:1px solid #c9c6b5;box-shadow:inset -1px 0 0 #fff"></div>
<div class="t" style="left:20px;top:2px;width:49px;text-align:right;font-size:11px;letter-spacing:-0.2px">ID</div>
<div class="a" style="left:73px;top:0px;width:200px;height:16px;background:#ece9d8;border-right:1px solid #c9c6b5;box-shadow:inset -1px 0 0 #fff"></div>
<div class="t" style="left:76px;top:2px;font-size:11px;letter-spacing:-0.2px">Ragione sociale</div>
<div class="a" style="left:273px;top:0px;width:133px;height:16px;background:#ece9d8;border-right:1px solid #c9c6b5;box-shadow:inset -1px 0 0 #fff"></div>
<div class="t" style="left:276px;top:2px;font-size:11px;letter-spacing:-0.2px">Indirizzo</div>
<div class="a" style="left:406px;top:0px;width:100px;height:16px;background:#ece9d8;border-right:1px solid #c9c6b5;box-shadow:inset -1px 0 0 #fff"></div>
<div class="t" style="left:409px;top:2px;font-size:11px;letter-spacing:-0.2px">Citta'</div>
<div class="a" style="left:506px;top:0px;width:40px;height:16px;background:#ece9d8;border-right:1px solid #c9c6b5;box-shadow:inset -1px 0 0 #fff"></div>
<div class="t" style="left:506px;top:2px;width:40px;text-align:center;font-size:11px;letter-spacing:-0.2px">Prov.</div>
<div class="a" style="left:546px;top:0px;width:80px;height:16px;background:#ece9d8;border-right:1px solid #c9c6b5;box-shadow:inset -1px 0 0 #fff"></div>
<div class="t" style="left:549px;top:2px;font-size:11px;letter-spacing:-0.2px">Telefono</div>
<div class="a" style="left:626px;top:0px;width:100px;height:16px;background:#ece9d8;border-right:1px solid #c9c6b5;box-shadow:inset -1px 0 0 #fff"></div>
<div class="t" style="left:629px;top:2px;font-size:11px;letter-spacing:-0.2px">UserID</div>
<div class="a" style="left:726px;top:0px;width:73px;height:16px;background:#ece9d8;border-right:1px solid #c9c6b5;box-shadow:inset -1px 0 0 #fff"></div>
<div class="t" style="left:729px;top:2px;font-size:11px;letter-spacing:-0.2px">Password</div>
<div class="a" style="left:0px;top:16px;width:20px;height:16px;background:#ece9d8;border-right:1px solid #c8c8c8;border-bottom:1px solid #c8c8c8"></div>
<div class="a" style="left:4px;top:18px;width:12px;height:12px;background:#fff;border:1px solid #555"></div>
<div class="a" style="left:20px;top:16px;width:53px;height:16px;background:#afeeee;border-right:1px solid #c8c8c8;border-bottom:1px solid #c8c8c8"></div>
<div class="t" style="left:20px;top:18px;width:49px;text-align:right;font-size:11px;letter-spacing:-0.2px">13028</div>
<div class="a" style="left:73px;top:16px;width:200px;height:16px;background:#afeeee;border-right:1px solid #c8c8c8;border-bottom:1px solid #c8c8c8"></div>
<div class="t" style="left:76px;top:18px;width:196px;overflow:hidden;font-size:11px;letter-spacing:-0.2px">&nbsp;<span style="letter-spacing:-0.55px">ARCOBALENO DI MASCIOTTI MASSIMO</span></div>
<div class="a" style="left:273px;top:16px;width:133px;height:16px;background:#afeeee;border-right:1px solid #c8c8c8;border-bottom:1px solid #c8c8c8"></div>
<div class="t" style="left:276px;top:18px;width:129px;overflow:hidden;font-size:11px;letter-spacing:-0.2px">ROMA 17</div>
<div class="a" style="left:406px;top:16px;width:100px;height:16px;background:#afeeee;border-right:1px solid #c8c8c8;border-bottom:1px solid #c8c8c8"></div>
<div class="t" style="left:409px;top:18px;width:96px;overflow:hidden;font-size:11px;letter-spacing:-0.2px">SPELLO</div>
<div class="a" style="left:506px;top:16px;width:40px;height:16px;background:#afeeee;border-right:1px solid #c8c8c8;border-bottom:1px solid #c8c8c8"></div>
<div class="t" style="left:506px;top:18px;width:40px;text-align:center;font-size:11px;letter-spacing:-0.2px">PG</div>
<div class="a" style="left:546px;top:16px;width:80px;height:16px;background:#afeeee;border-right:1px solid #c8c8c8;border-bottom:1px solid #c8c8c8"></div>
<div class="t" style="left:549px;top:18px;width:76px;overflow:hidden;font-size:11px;letter-spacing:-0.2px">0742652705</div>
<div class="a" style="left:626px;top:16px;width:100px;height:16px;background:#afeeee;border-right:1px solid #c8c8c8;border-bottom:1px solid #c8c8c8"></div>
<div class="t" style="left:629px;top:18px;width:96px;overflow:hidden;font-size:11px;letter-spacing:-0.2px">arcobalenospello...</div>
<div class="a" style="left:726px;top:16px;width:73px;height:16px;background:#afeeee;border-right:1px solid #c8c8c8;border-bottom:1px solid #c8c8c8"></div>
<div class="t" style="left:729px;top:18px;width:69px;overflow:hidden;font-size:11px;letter-spacing:-0.2px">nicole121106</div>
<div class="a" style="left:0px;top:32px;width:20px;height:16px;background:#ece9d8;border-right:1px solid #c8c8c8;border-bottom:1px solid #c8c8c8"></div>
<div class="a" style="left:4px;top:34px;width:12px;height:12px;background:#fff;border:1px solid #555"></div>
<div class="a" style="left:20px;top:32px;width:53px;height:16px;background:#fff;border-right:1px solid #c8c8c8;border-bottom:1px solid #c8c8c8"></div>
<div class="t" style="left:20px;top:34px;width:49px;text-align:right;font-size:11px;letter-spacing:-0.2px">5160</div>
<div class="a" style="left:73px;top:32px;width:200px;height:16px;background:#fff;border-right:1px solid #c8c8c8;border-bottom:1px solid #c8c8c8"></div>
<div class="t" style="left:76px;top:34px;width:196px;overflow:hidden;font-size:11px;letter-spacing:-0.2px">&nbsp;Ballato Carmela&nbsp; -&nbsp; Capricci Fotografici</div>
<div class="a" style="left:273px;top:32px;width:133px;height:16px;background:#fff;border-right:1px solid #c8c8c8;border-bottom:1px solid #c8c8c8"></div>
<div class="t" style="left:276px;top:34px;width:129px;overflow:hidden;font-size:11px;letter-spacing:-0.2px">Via Fossa della Creta, 159</div>
<div class="a" style="left:406px;top:32px;width:100px;height:16px;background:#fff;border-right:1px solid #c8c8c8;border-bottom:1px solid #c8c8c8"></div>
<div class="t" style="left:409px;top:34px;width:96px;overflow:hidden;font-size:11px;letter-spacing:-0.2px">Catania</div>
<div class="a" style="left:506px;top:32px;width:40px;height:16px;background:#fff;border-right:1px solid #c8c8c8;border-bottom:1px solid #c8c8c8"></div>
<div class="t" style="left:506px;top:34px;width:40px;text-align:center;font-size:11px;letter-spacing:-0.2px">CT</div>
<div class="a" style="left:546px;top:32px;width:80px;height:16px;background:#fff;border-right:1px solid #c8c8c8;border-bottom:1px solid #c8c8c8"></div>
<div class="t" style="left:549px;top:34px;width:76px;overflow:hidden;font-size:11px;letter-spacing:-0.2px">0952161320</div>
<div class="a" style="left:626px;top:32px;width:100px;height:16px;background:#fff;border-right:1px solid #c8c8c8;border-bottom:1px solid #c8c8c8"></div>
<div class="t" style="left:629px;top:34px;width:96px;overflow:hidden;font-size:11px;letter-spacing:-0.2px">capriccifotografici</div>
<div class="a" style="left:726px;top:32px;width:73px;height:16px;background:#fff;border-right:1px solid #c8c8c8;border-bottom:1px solid #c8c8c8"></div>
<div class="t" style="left:729px;top:34px;width:69px;overflow:hidden;font-size:11px;letter-spacing:-0.2px">3741FR</div>
<div class="a" style="left:0px;top:48px;width:20px;height:16px;background:#ece9d8;border-right:1px solid #c8c8c8;border-bottom:1px solid #c8c8c8"></div>
<div class="a" style="left:4px;top:50px;width:12px;height:12px;background:#fff;border:1px solid #555"></div>
<div class="a" style="left:20px;top:48px;width:53px;height:16px;background:#fff;border-right:1px solid #c8c8c8;border-bottom:1px solid #c8c8c8"></div>
<div class="t" style="left:20px;top:50px;width:49px;text-align:right;font-size:11px;letter-spacing:-0.2px">18080</div>
<div class="a" style="left:73px;top:48px;width:200px;height:16px;background:#fff;border-right:1px solid #c8c8c8;border-bottom:1px solid #c8c8c8"></div>
<div class="t" style="left:76px;top:50px;width:196px;overflow:hidden;font-size:11px;letter-spacing:-0.2px">&nbsp;Bellapianta Giuseppe Foto Video Click</div>
<div class="a" style="left:273px;top:48px;width:133px;height:16px;background:#fff;border-right:1px solid #c8c8c8;border-bottom:1px solid #c8c8c8"></div>
<div class="t" style="left:276px;top:50px;width:129px;overflow:hidden;font-size:11px;letter-spacing:-0.2px">VIA XXV APRILE 5/B</div>
<div class="a" style="left:406px;top:48px;width:100px;height:16px;background:#fff;border-right:1px solid #c8c8c8;border-bottom:1px solid #c8c8c8"></div>
<div class="t" style="left:409px;top:50px;width:96px;overflow:hidden;font-size:11px;letter-spacing:-0.2px">CERIGNOLA</div>
<div class="a" style="left:506px;top:48px;width:40px;height:16px;background:#fff;border-right:1px solid #c8c8c8;border-bottom:1px solid #c8c8c8"></div>
<div class="t" style="left:506px;top:50px;width:40px;text-align:center;font-size:11px;letter-spacing:-0.2px">FG</div>
<div class="a" style="left:546px;top:48px;width:80px;height:16px;background:#fff;border-right:1px solid #c8c8c8;border-bottom:1px solid #c8c8c8"></div>
<div class="t" style="left:549px;top:50px;width:76px;overflow:hidden;font-size:11px;letter-spacing:-0.2px">0885427939</div>
<div class="a" style="left:626px;top:48px;width:100px;height:16px;background:#fff;border-right:1px solid #c8c8c8;border-bottom:1px solid #c8c8c8"></div>
<div class="t" style="left:629px;top:50px;width:96px;overflow:hidden;font-size:11px;letter-spacing:-0.2px">FOTOVIDEOCLICK</div>
<div class="a" style="left:726px;top:48px;width:73px;height:16px;background:#fff;border-right:1px solid #c8c8c8;border-bottom:1px solid #c8c8c8"></div>
<div class="t" style="left:729px;top:50px;width:69px;overflow:hidden;font-size:11px;letter-spacing:-0.2px">GIORGIO</div>
<div class="a" style="left:0px;top:64px;width:20px;height:16px;background:#ece9d8;border-right:1px solid #c8c8c8;border-bottom:1px solid #c8c8c8"></div>
<div class="a" style="left:4px;top:66px;width:12px;height:12px;background:#fff;border:1px solid #555"></div>
<div class="a" style="left:20px;top:64px;width:53px;height:16px;background:#fff;border-right:1px solid #c8c8c8;border-bottom:1px solid #c8c8c8"></div>
<div class="t" style="left:20px;top:66px;width:49px;text-align:right;font-size:11px;letter-spacing:-0.2px">5226</div>
<div class="a" style="left:73px;top:64px;width:200px;height:16px;background:#fff;border-right:1px solid #c8c8c8;border-bottom:1px solid #c8c8c8"></div>
<div class="t" style="left:76px;top:66px;width:196px;overflow:hidden;font-size:11px;letter-spacing:-0.2px">&nbsp;damiano errico fotografo</div>
<div class="a" style="left:273px;top:64px;width:133px;height:16px;background:#fff;border-right:1px solid #c8c8c8;border-bottom:1px solid #c8c8c8"></div>
<div class="t" style="left:276px;top:66px;width:129px;overflow:hidden;font-size:11px;letter-spacing:-0.2px">via acquaviva 225</div>
<div class="a" style="left:406px;top:64px;width:100px;height:16px;background:#fff;border-right:1px solid #c8c8c8;border-bottom:1px solid #c8c8c8"></div>
<div class="t" style="left:409px;top:66px;width:96px;overflow:hidden;font-size:11px;letter-spacing:-0.2px">caserta</div>
<div class="a" style="left:506px;top:64px;width:40px;height:16px;background:#fff;border-right:1px solid #c8c8c8;border-bottom:1px solid #c8c8c8"></div>
<div class="t" style="left:506px;top:66px;width:40px;text-align:center;font-size:11px;letter-spacing:-0.2px">CE</div>
<div class="a" style="left:546px;top:64px;width:80px;height:16px;background:#fff;border-right:1px solid #c8c8c8;border-bottom:1px solid #c8c8c8"></div>
<div class="t" style="left:549px;top:66px;width:76px;overflow:hidden;font-size:11px;letter-spacing:-0.2px">3389163333</div>
<div class="a" style="left:626px;top:64px;width:100px;height:16px;background:#fff;border-right:1px solid #c8c8c8;border-bottom:1px solid #c8c8c8"></div>
<div class="t" style="left:629px;top:66px;width:96px;overflow:hidden;font-size:11px;letter-spacing:-0.2px">damiano</div>
<div class="a" style="left:726px;top:64px;width:73px;height:16px;background:#fff;border-right:1px solid #c8c8c8;border-bottom:1px solid #c8c8c8"></div>
<div class="t" style="left:729px;top:66px;width:69px;overflow:hidden;font-size:11px;letter-spacing:-0.2px">riccardo</div>
<div class="a" style="left:0px;top:80px;width:20px;height:16px;background:#ece9d8;border-right:1px solid #c8c8c8;border-bottom:1px solid #c8c8c8"></div>
<div class="a" style="left:4px;top:82px;width:12px;height:12px;background:#fff;border:1px solid #555"></div>
<div class="a" style="left:20px;top:80px;width:53px;height:16px;background:#fff;border-right:1px solid #c8c8c8;border-bottom:1px solid #c8c8c8"></div>
<div class="t" style="left:20px;top:82px;width:49px;text-align:right;font-size:11px;letter-spacing:-0.2px">9232</div>
<div class="a" style="left:73px;top:80px;width:200px;height:16px;background:#fff;border-right:1px solid #c8c8c8;border-bottom:1px solid #c8c8c8"></div>
<div class="t" style="left:76px;top:82px;width:196px;overflow:hidden;font-size:11px;letter-spacing:-0.2px">&nbsp;Foto Studio Dima</div>
<div class="a" style="left:273px;top:80px;width:133px;height:16px;background:#fff;border-right:1px solid #c8c8c8;border-bottom:1px solid #c8c8c8"></div>
<div class="t" style="left:276px;top:82px;width:129px;overflow:hidden;font-size:11px;letter-spacing:-0.2px">via Nazionale Appia</div>
<div class="a" style="left:406px;top:80px;width:100px;height:16px;background:#fff;border-right:1px solid #c8c8c8;border-bottom:1px solid #c8c8c8"></div>
<div class="t" style="left:409px;top:82px;width:96px;overflow:hidden;font-size:11px;letter-spacing:-0.2px">Casapulla</div>
<div class="a" style="left:506px;top:80px;width:40px;height:16px;background:#fff;border-right:1px solid #c8c8c8;border-bottom:1px solid #c8c8c8"></div>
<div class="t" style="left:506px;top:82px;width:40px;text-align:center;font-size:11px;letter-spacing:-0.2px">CE</div>
<div class="a" style="left:546px;top:80px;width:80px;height:16px;background:#fff;border-right:1px solid #c8c8c8;border-bottom:1px solid #c8c8c8"></div>
<div class="t" style="left:549px;top:82px;width:76px;overflow:hidden;font-size:11px;letter-spacing:-0.2px">0823460098</div>
<div class="a" style="left:626px;top:80px;width:100px;height:16px;background:#fff;border-right:1px solid #c8c8c8;border-bottom:1px solid #c8c8c8"></div>
<div class="t" style="left:629px;top:82px;width:96px;overflow:hidden;font-size:11px;letter-spacing:-0.2px">fotostudiodima</div>
<div class="a" style="left:726px;top:80px;width:73px;height:16px;background:#fff;border-right:1px solid #c8c8c8;border-bottom:1px solid #c8c8c8"></div>
<div class="t" style="left:729px;top:82px;width:69px;overflow:hidden;font-size:11px;letter-spacing:-0.2px">dlcntm</div>
<div class="a" style="left:0px;top:96px;width:20px;height:16px;background:#ece9d8;border-right:1px solid #c8c8c8;border-bottom:1px solid #c8c8c8"></div>
<div class="a" style="left:4px;top:98px;width:12px;height:12px;background:#fff;border:1px solid #555"></div>
<div class="a" style="left:20px;top:96px;width:53px;height:16px;background:#fff;border-right:1px solid #c8c8c8;border-bottom:1px solid #c8c8c8"></div>
<div class="t" style="left:20px;top:98px;width:49px;text-align:right;font-size:11px;letter-spacing:-0.2px">4280</div>
<div class="a" style="left:73px;top:96px;width:200px;height:16px;background:#fff;border-right:1px solid #c8c8c8;border-bottom:1px solid #c8c8c8"></div>
<div class="t" style="left:76px;top:98px;width:196px;overflow:hidden;font-size:11px;letter-spacing:-0.2px">&nbsp;greco giovanni</div>
<div class="a" style="left:273px;top:96px;width:133px;height:16px;background:#fff;border-right:1px solid #c8c8c8;border-bottom:1px solid #c8c8c8"></div>
<div class="t" style="left:276px;top:98px;width:129px;overflow:hidden;font-size:11px;letter-spacing:-0.2px">via Filippo Di Giovanni 67</div>
<div class="a" style="left:406px;top:96px;width:100px;height:16px;background:#fff;border-right:1px solid #c8c8c8;border-bottom:1px solid #c8c8c8"></div>
<div class="t" style="left:409px;top:98px;width:96px;overflow:hidden;font-size:11px;letter-spacing:-0.2px">palermo</div>
<div class="a" style="left:506px;top:96px;width:40px;height:16px;background:#fff;border-right:1px solid #c8c8c8;border-bottom:1px solid #c8c8c8"></div>
<div class="t" style="left:506px;top:98px;width:40px;text-align:center;font-size:11px;letter-spacing:-0.2px">pa</div>
<div class="a" style="left:546px;top:96px;width:80px;height:16px;background:#fff;border-right:1px solid #c8c8c8;border-bottom:1px solid #c8c8c8"></div>
<div class="t" style="left:549px;top:98px;width:76px;overflow:hidden;font-size:11px;letter-spacing:-0.2px">0916882012</div>
<div class="a" style="left:626px;top:96px;width:100px;height:16px;background:#fff;border-right:1px solid #c8c8c8;border-bottom:1px solid #c8c8c8"></div>
<div class="t" style="left:629px;top:98px;width:96px;overflow:hidden;font-size:11px;letter-spacing:-0.2px">maurizio</div>
<div class="a" style="left:726px;top:96px;width:73px;height:16px;background:#fff;border-right:1px solid #c8c8c8;border-bottom:1px solid #c8c8c8"></div>
<div class="t" style="left:729px;top:98px;width:69px;overflow:hidden;font-size:11px;letter-spacing:-0.2px">foto</div>
<div class="a" style="left:0px;top:112px;width:20px;height:16px;background:#ece9d8;border-right:1px solid #c8c8c8;border-bottom:1px solid #c8c8c8"></div>
<div class="a" style="left:4px;top:114px;width:12px;height:12px;background:#fff;border:1px solid #555"></div>
<div class="a" style="left:20px;top:112px;width:53px;height:16px;background:#fff;border-right:1px solid #c8c8c8;border-bottom:1px solid #c8c8c8"></div>
<div class="t" style="left:20px;top:114px;width:49px;text-align:right;font-size:11px;letter-spacing:-0.2px">11894</div>
<div class="a" style="left:73px;top:112px;width:200px;height:16px;background:#fff;border-right:1px solid #c8c8c8;border-bottom:1px solid #c8c8c8"></div>
<div class="t" style="left:76px;top:114px;width:196px;overflow:hidden;font-size:11px;letter-spacing:-0.2px">&nbsp;Ingrafika</div>
<div class="a" style="left:273px;top:112px;width:133px;height:16px;background:#fff;border-right:1px solid #c8c8c8;border-bottom:1px solid #c8c8c8"></div>
<div class="t" style="left:276px;top:114px;width:129px;overflow:hidden;font-size:11px;letter-spacing:-0.2px">via domenico carbone g...</div>
<div class="a" style="left:406px;top:112px;width:100px;height:16px;background:#fff;border-right:1px solid #c8c8c8;border-bottom:1px solid #c8c8c8"></div>
<div class="t" style="left:409px;top:114px;width:96px;overflow:hidden;font-size:11px;letter-spacing:-0.2px">oppido mamertina</div>
<div class="a" style="left:506px;top:112px;width:40px;height:16px;background:#fff;border-right:1px solid #c8c8c8;border-bottom:1px solid #c8c8c8"></div>
<div class="t" style="left:506px;top:114px;width:40px;text-align:center;font-size:11px;letter-spacing:-0.2px">RC</div>
<div class="a" style="left:546px;top:112px;width:80px;height:16px;background:#fff;border-right:1px solid #c8c8c8;border-bottom:1px solid #c8c8c8"></div>
<div class="t" style="left:549px;top:114px;width:76px;overflow:hidden;font-size:11px;letter-spacing:-0.2px">3332367588</div>
<div class="a" style="left:626px;top:112px;width:100px;height:16px;background:#fff;border-right:1px solid #c8c8c8;border-bottom:1px solid #c8c8c8"></div>
<div class="t" style="left:629px;top:114px;width:96px;overflow:hidden;font-size:11px;letter-spacing:-0.2px">ingrafika</div>
<div class="a" style="left:726px;top:112px;width:73px;height:16px;background:#fff;border-right:1px solid #c8c8c8;border-bottom:1px solid #c8c8c8"></div>
<div class="t" style="left:729px;top:114px;width:69px;overflow:hidden;font-size:11px;letter-spacing:-0.2px">laboratorio108</div>
<div class="a" style="left:0px;top:128px;width:20px;height:16px;background:#ece9d8;border-right:1px solid #c8c8c8;border-bottom:1px solid #c8c8c8"></div>
<div class="a" style="left:4px;top:130px;width:12px;height:12px;background:#fff;border:1px solid #555"></div>
<div class="a" style="left:20px;top:128px;width:53px;height:16px;background:#fff;border-right:1px solid #c8c8c8;border-bottom:1px solid #c8c8c8"></div>
<div class="t" style="left:20px;top:130px;width:49px;text-align:right;font-size:11px;letter-spacing:-0.2px">20236</div>
<div class="a" style="left:73px;top:128px;width:200px;height:16px;background:#fff;border-right:1px solid #c8c8c8;border-bottom:1px solid #c8c8c8"></div>
<div class="t" style="left:76px;top:130px;width:196px;overflow:hidden;font-size:11px;letter-spacing:-0.2px">&nbsp;minen laura</div>
<div class="a" style="left:273px;top:128px;width:133px;height:16px;background:#fff;border-right:1px solid #c8c8c8;border-bottom:1px solid #c8c8c8"></div>
<div class="t" style="left:276px;top:130px;width:129px;overflow:hidden;font-size:11px;letter-spacing:-0.2px">via tomadini 6</div>
<div class="a" style="left:406px;top:128px;width:100px;height:16px;background:#fff;border-right:1px solid #c8c8c8;border-bottom:1px solid #c8c8c8"></div>
<div class="t" style="left:409px;top:130px;width:96px;overflow:hidden;font-size:11px;letter-spacing:-0.2px">pavia</div>
<div class="a" style="left:506px;top:128px;width:40px;height:16px;background:#fff;border-right:1px solid #c8c8c8;border-bottom:1px solid #c8c8c8"></div>
<div class="t" style="left:506px;top:130px;width:40px;text-align:center;font-size:11px;letter-spacing:-0.2px">udi</div>
<div class="a" style="left:546px;top:128px;width:80px;height:16px;background:#fff;border-right:1px solid #c8c8c8;border-bottom:1px solid #c8c8c8"></div>
<div class="t" style="left:549px;top:130px;width:76px;overflow:hidden;font-size:11px;letter-spacing:-0.2px">3462410097</div>
<div class="a" style="left:626px;top:128px;width:100px;height:16px;background:#fff;border-right:1px solid #c8c8c8;border-bottom:1px solid #c8c8c8"></div>
<div class="t" style="left:629px;top:130px;width:96px;overflow:hidden;font-size:11px;letter-spacing:-0.2px">lauram</div>
<div class="a" style="left:726px;top:128px;width:73px;height:16px;background:#fff;border-right:1px solid #c8c8c8;border-bottom:1px solid #c8c8c8"></div>
<div class="t" style="left:729px;top:130px;width:69px;overflow:hidden;font-size:11px;letter-spacing:-0.2px">385il6767</div>
<div class="a" style="left:0px;top:144px;width:20px;height:16px;background:#ece9d8;border-right:1px solid #c8c8c8;border-bottom:1px solid #c8c8c8"></div>
<div class="a" style="left:4px;top:146px;width:12px;height:12px;background:#fff;border:1px solid #555"></div>
<div class="a" style="left:20px;top:144px;width:53px;height:16px;background:#fff;border-right:1px solid #c8c8c8;border-bottom:1px solid #c8c8c8"></div>
<div class="t" style="left:20px;top:146px;width:49px;text-align:right;font-size:11px;letter-spacing:-0.2px">12214</div>
<div class="a" style="left:73px;top:144px;width:200px;height:16px;background:#fff;border-right:1px solid #c8c8c8;border-bottom:1px solid #c8c8c8"></div>
<div class="t" style="left:76px;top:146px;width:196px;overflow:hidden;font-size:11px;letter-spacing:-0.2px">&nbsp;Mirabella Salvatore</div>
<div class="a" style="left:273px;top:144px;width:133px;height:16px;background:#fff;border-right:1px solid #c8c8c8;border-bottom:1px solid #c8c8c8"></div>
<div class="t" style="left:276px;top:146px;width:129px;overflow:hidden;font-size:11px;letter-spacing:-0.2px">via soldato c.musumeci 8</div>
<div class="a" style="left:406px;top:144px;width:100px;height:16px;background:#fff;border-right:1px solid #c8c8c8;border-bottom:1px solid #c8c8c8"></div>
<div class="t" style="left:409px;top:146px;width:96px;overflow:hidden;font-size:11px;letter-spacing:-0.2px">aci s.antonio</div>
<div class="a" style="left:506px;top:144px;width:40px;height:16px;background:#fff;border-right:1px solid #c8c8c8;border-bottom:1px solid #c8c8c8"></div>
<div class="t" style="left:506px;top:146px;width:40px;text-align:center;font-size:11px;letter-spacing:-0.2px">CT</div>
<div class="a" style="left:546px;top:144px;width:80px;height:16px;background:#fff;border-right:1px solid #c8c8c8;border-bottom:1px solid #c8c8c8"></div>
<div class="t" style="left:549px;top:146px;width:76px;overflow:hidden;font-size:11px;letter-spacing:-0.2px">3478189067</div>
<div class="a" style="left:626px;top:144px;width:100px;height:16px;background:#fff;border-right:1px solid #c8c8c8;border-bottom:1px solid #c8c8c8"></div>
<div class="t" style="left:629px;top:146px;width:96px;overflow:hidden;font-size:11px;letter-spacing:-0.2px">salvomirabellafot...</div>
<div class="a" style="left:726px;top:144px;width:73px;height:16px;background:#fff;border-right:1px solid #c8c8c8;border-bottom:1px solid #c8c8c8"></div>
<div class="t" style="left:729px;top:146px;width:69px;overflow:hidden;font-size:11px;letter-spacing:-0.2px">smiraice79</div>
<div class="a" style="left:0px;top:160px;width:20px;height:16px;background:#ece9d8;border-right:1px solid #c8c8c8;border-bottom:1px solid #c8c8c8"></div>
<div class="a" style="left:4px;top:162px;width:12px;height:12px;background:#fff;border:1px solid #555"></div>
<div class="a" style="left:20px;top:160px;width:53px;height:16px;background:#fff;border-right:1px solid #c8c8c8;border-bottom:1px solid #c8c8c8"></div>
<div class="t" style="left:20px;top:162px;width:49px;text-align:right;font-size:11px;letter-spacing:-0.2px">18320</div>
<div class="a" style="left:73px;top:160px;width:200px;height:16px;background:#fff;border-right:1px solid #c8c8c8;border-bottom:1px solid #c8c8c8"></div>
<div class="t" style="left:76px;top:162px;width:196px;overflow:hidden;font-size:11px;letter-spacing:-0.2px">1..2..print srl</div>
<div class="a" style="left:273px;top:160px;width:133px;height:16px;background:#fff;border-right:1px solid #c8c8c8;border-bottom:1px solid #c8c8c8"></div>
<div class="t" style="left:276px;top:162px;width:129px;overflow:hidden;font-size:11px;letter-spacing:-0.2px">via g.porzio, 8</div>
<div class="a" style="left:406px;top:160px;width:100px;height:16px;background:#fff;border-right:1px solid #c8c8c8;border-bottom:1px solid #c8c8c8"></div>
<div class="t" style="left:409px;top:162px;width:96px;overflow:hidden;font-size:11px;letter-spacing:-0.2px">napoli</div>
<div class="a" style="left:506px;top:160px;width:40px;height:16px;background:#fff;border-right:1px solid #c8c8c8;border-bottom:1px solid #c8c8c8"></div>
<div class="t" style="left:506px;top:162px;width:40px;text-align:center;font-size:11px;letter-spacing:-0.2px">na</div>
<div class="a" style="left:546px;top:160px;width:80px;height:16px;background:#fff;border-right:1px solid #c8c8c8;border-bottom:1px solid #c8c8c8"></div>
<div class="t" style="left:549px;top:162px;width:76px;overflow:hidden;font-size:11px;letter-spacing:-0.2px">081622016</div>
<div class="a" style="left:626px;top:160px;width:100px;height:16px;background:#fff;border-right:1px solid #c8c8c8;border-bottom:1px solid #c8c8c8"></div>
<div class="t" style="left:629px;top:162px;width:96px;overflow:hidden;font-size:11px;letter-spacing:-0.2px">12print.it</div>
<div class="a" style="left:726px;top:160px;width:73px;height:16px;background:#fff;border-right:1px solid #c8c8c8;border-bottom:1px solid #c8c8c8"></div>
<div class="t" style="left:729px;top:162px;width:69px;overflow:hidden;font-size:11px;letter-spacing:-0.2px">dig892424</div>
<div class="a" style="left:0px;top:176px;width:20px;height:16px;background:#ece9d8;border-right:1px solid #c8c8c8;border-bottom:1px solid #c8c8c8"></div>
<div class="a" style="left:4px;top:178px;width:12px;height:12px;background:#fff;border:1px solid #555"></div>
<div class="a" style="left:20px;top:176px;width:53px;height:16px;background:#fff;border-right:1px solid #c8c8c8;border-bottom:1px solid #c8c8c8"></div>
<div class="t" style="left:20px;top:178px;width:49px;text-align:right;font-size:11px;letter-spacing:-0.2px">5524</div>
<div class="a" style="left:73px;top:176px;width:200px;height:16px;background:#fff;border-right:1px solid #c8c8c8;border-bottom:1px solid #c8c8c8"></div>
<div class="t" style="left:76px;top:178px;width:196px;overflow:hidden;font-size:11px;letter-spacing:-0.2px">12 print</div>
<div class="a" style="left:273px;top:176px;width:133px;height:16px;background:#fff;border-right:1px solid #c8c8c8;border-bottom:1px solid #c8c8c8"></div>
<div class="t" style="left:276px;top:178px;width:129px;overflow:hidden;font-size:11px;letter-spacing:-0.2px">via MAZZINI 67</div>
<div class="a" style="left:406px;top:176px;width:100px;height:16px;background:#fff;border-right:1px solid #c8c8c8;border-bottom:1px solid #c8c8c8"></div>
<div class="t" style="left:409px;top:178px;width:96px;overflow:hidden;font-size:11px;letter-spacing:-0.2px">BELLIZZI</div>
<div class="a" style="left:506px;top:176px;width:40px;height:16px;background:#fff;border-right:1px solid #c8c8c8;border-bottom:1px solid #c8c8c8"></div>
<div class="t" style="left:506px;top:178px;width:40px;text-align:center;font-size:11px;letter-spacing:-0.2px">SA</div>
<div class="a" style="left:546px;top:176px;width:80px;height:16px;background:#fff;border-right:1px solid #c8c8c8;border-bottom:1px solid #c8c8c8"></div>
<div class="t" style="left:549px;top:178px;width:76px;overflow:hidden;font-size:11px;letter-spacing:-0.2px">0828-51491</div>
<div class="a" style="left:626px;top:176px;width:100px;height:16px;background:#fff;border-right:1px solid #c8c8c8;border-bottom:1px solid #c8c8c8"></div>
<div class="t" style="left:629px;top:178px;width:96px;overflow:hidden;font-size:11px;letter-spacing:-0.2px">cesare</div>
<div class="a" style="left:726px;top:176px;width:73px;height:16px;background:#fff;border-right:1px solid #c8c8c8;border-bottom:1px solid #c8c8c8"></div>
<div class="t" style="left:729px;top:178px;width:69px;overflow:hidden;font-size:11px;letter-spacing:-0.2px">120453</div>
<div class="a" style="left:0px;top:192px;width:20px;height:16px;background:#ece9d8;border-right:1px solid #c8c8c8;border-bottom:1px solid #c8c8c8"></div>
<div class="a" style="left:4px;top:194px;width:12px;height:12px;background:#fff;border:1px solid #555"></div>
<div class="a" style="left:20px;top:192px;width:53px;height:16px;background:#fff;border-right:1px solid #c8c8c8;border-bottom:1px solid #c8c8c8"></div>
<div class="t" style="left:20px;top:194px;width:49px;text-align:right;font-size:11px;letter-spacing:-0.2px">13205</div>
<div class="a" style="left:73px;top:192px;width:200px;height:16px;background:#fff;border-right:1px solid #c8c8c8;border-bottom:1px solid #c8c8c8"></div>
<div class="t" style="left:76px;top:194px;width:196px;overflow:hidden;font-size:11px;letter-spacing:-0.2px">2 ville grafiche di cantele gianluigi</div>
<div class="a" style="left:273px;top:192px;width:133px;height:16px;background:#fff;border-right:1px solid #c8c8c8;border-bottom:1px solid #c8c8c8"></div>
<div class="t" style="left:276px;top:194px;width:129px;overflow:hidden;font-size:11px;letter-spacing:-0.2px">via sega, 108</div>
<div class="a" style="left:406px;top:192px;width:100px;height:16px;background:#fff;border-right:1px solid #c8c8c8;border-bottom:1px solid #c8c8c8"></div>
<div class="t" style="left:409px;top:194px;width:96px;overflow:hidden;font-size:11px;letter-spacing:-0.2px">Dueville</div>
<div class="a" style="left:506px;top:192px;width:40px;height:16px;background:#fff;border-right:1px solid #c8c8c8;border-bottom:1px solid #c8c8c8"></div>
<div class="t" style="left:506px;top:194px;width:40px;text-align:center;font-size:11px;letter-spacing:-0.2px">VI</div>
<div class="a" style="left:546px;top:192px;width:80px;height:16px;background:#fff;border-right:1px solid #c8c8c8;border-bottom:1px solid #c8c8c8"></div>
<div class="t" style="left:549px;top:194px;width:76px;overflow:hidden;font-size:11px;letter-spacing:-0.2px">0444591127</div>
<div class="a" style="left:626px;top:192px;width:100px;height:16px;background:#fff;border-right:1px solid #c8c8c8;border-bottom:1px solid #c8c8c8"></div>
<div class="t" style="left:629px;top:194px;width:96px;overflow:hidden;font-size:11px;letter-spacing:-0.2px"></div>
<div class="a" style="left:726px;top:192px;width:73px;height:16px;background:#fff;border-right:1px solid #c8c8c8;border-bottom:1px solid #c8c8c8"></div>
<div class="t" style="left:729px;top:194px;width:69px;overflow:hidden;font-size:11px;letter-spacing:-0.2px"></div>
<div class="a" style="left:0px;top:208px;width:20px;height:16px;background:#ece9d8;border-right:1px solid #c8c8c8;border-bottom:1px solid #c8c8c8"></div>
<div class="a" style="left:4px;top:210px;width:12px;height:12px;background:#fff;border:1px solid #555"></div>
<div class="a" style="left:20px;top:208px;width:53px;height:16px;background:#fff;border-right:1px solid #c8c8c8;border-bottom:1px solid #c8c8c8"></div>
<div class="t" style="left:20px;top:210px;width:49px;text-align:right;font-size:11px;letter-spacing:-0.2px">12086</div>
<div class="a" style="left:73px;top:208px;width:200px;height:16px;background:#fff;border-right:1px solid #c8c8c8;border-bottom:1px solid #c8c8c8"></div>
<div class="t" style="left:76px;top:210px;width:196px;overflow:hidden;font-size:11px;letter-spacing:-0.2px">3D creations</div>
<div class="a" style="left:273px;top:208px;width:133px;height:16px;background:#fff;border-right:1px solid #c8c8c8;border-bottom:1px solid #c8c8c8"></div>
<div class="t" style="left:276px;top:210px;width:129px;overflow:hidden;font-size:11px;letter-spacing:-0.2px">Via A. Alise. 89</div>
<div class="a" style="left:406px;top:208px;width:100px;height:16px;background:#fff;border-right:1px solid #c8c8c8;border-bottom:1px solid #c8c8c8"></div>
<div class="t" style="left:409px;top:210px;width:96px;overflow:hidden;font-size:11px;letter-spacing:-0.2px">MARIGLIANO</div>
<div class="a" style="left:506px;top:208px;width:40px;height:16px;background:#fff;border-right:1px solid #c8c8c8;border-bottom:1px solid #c8c8c8"></div>
<div class="t" style="left:506px;top:210px;width:40px;text-align:center;font-size:11px;letter-spacing:-0.2px">NA</div>
<div class="a" style="left:546px;top:208px;width:80px;height:16px;background:#fff;border-right:1px solid #c8c8c8;border-bottom:1px solid #c8c8c8"></div>
<div class="t" style="left:549px;top:210px;width:76px;overflow:hidden;font-size:11px;letter-spacing:-0.2px">0818411616</div>
<div class="a" style="left:626px;top:208px;width:100px;height:16px;background:#fff;border-right:1px solid #c8c8c8;border-bottom:1px solid #c8c8c8"></div>
<div class="t" style="left:629px;top:210px;width:96px;overflow:hidden;font-size:11px;letter-spacing:-0.2px">3dcreations</div>
<div class="a" style="left:726px;top:208px;width:73px;height:16px;background:#fff;border-right:1px solid #c8c8c8;border-bottom:1px solid #c8c8c8"></div>
<div class="t" style="left:729px;top:210px;width:69px;overflow:hidden;font-size:11px;letter-spacing:-0.2px">pippoekatia</div>
<div class="a" style="left:0px;top:224px;width:20px;height:16px;background:#ece9d8;border-right:1px solid #c8c8c8;border-bottom:1px solid #c8c8c8"></div>
<div class="a" style="left:4px;top:226px;width:12px;height:12px;background:#fff;border:1px solid #555"></div>
<div class="a" style="left:20px;top:224px;width:53px;height:16px;background:#fff;border-right:1px solid #c8c8c8;border-bottom:1px solid #c8c8c8"></div>
<div class="t" style="left:20px;top:226px;width:49px;text-align:right;font-size:11px;letter-spacing:-0.2px">18588</div>
<div class="a" style="left:73px;top:224px;width:200px;height:16px;background:#fff;border-right:1px solid #c8c8c8;border-bottom:1px solid #c8c8c8"></div>
<div class="t" style="left:76px;top:226px;width:196px;overflow:hidden;font-size:11px;letter-spacing:-0.2px">3mdigital sas</div>
<div class="a" style="left:273px;top:224px;width:133px;height:16px;background:#fff;border-right:1px solid #c8c8c8;border-bottom:1px solid #c8c8c8"></div>
<div class="t" style="left:276px;top:226px;width:129px;overflow:hidden;font-size:11px;letter-spacing:-0.2px">via antica giardini 4a/6</div>
<div class="a" style="left:406px;top:224px;width:100px;height:16px;background:#fff;border-right:1px solid #c8c8c8;border-bottom:1px solid #c8c8c8"></div>
<div class="t" style="left:409px;top:226px;width:96px;overflow:hidden;font-size:11px;letter-spacing:-0.2px">giugliano in camp...</div>
<div class="a" style="left:506px;top:224px;width:40px;height:16px;background:#fff;border-right:1px solid #c8c8c8;border-bottom:1px solid #c8c8c8"></div>
<div class="t" style="left:506px;top:226px;width:40px;text-align:center;font-size:11px;letter-spacing:-0.2px">na</div>
<div class="a" style="left:546px;top:224px;width:80px;height:16px;background:#fff;border-right:1px solid #c8c8c8;border-bottom:1px solid #c8c8c8"></div>
<div class="t" style="left:549px;top:226px;width:76px;overflow:hidden;font-size:11px;letter-spacing:-0.2px">0810602712</div>
<div class="a" style="left:626px;top:224px;width:100px;height:16px;background:#fff;border-right:1px solid #c8c8c8;border-bottom:1px solid #c8c8c8"></div>
<div class="t" style="left:629px;top:226px;width:96px;overflow:hidden;font-size:11px;letter-spacing:-0.2px">3m</div>
<div class="a" style="left:726px;top:224px;width:73px;height:16px;background:#fff;border-right:1px solid #c8c8c8;border-bottom:1px solid #c8c8c8"></div>
<div class="t" style="left:729px;top:226px;width:69px;overflow:hidden;font-size:11px;letter-spacing:-0.2px">caruso</div>
<div class="a" style="left:0px;top:240px;width:20px;height:16px;background:#ece9d8;border-right:1px solid #c8c8c8;border-bottom:1px solid #c8c8c8"></div>
<div class="a" style="left:4px;top:242px;width:12px;height:12px;background:#fff;border:1px solid #555"></div>
<div class="a" style="left:20px;top:240px;width:53px;height:16px;background:#fff;border-right:1px solid #c8c8c8;border-bottom:1px solid #c8c8c8"></div>
<div class="t" style="left:20px;top:242px;width:49px;text-align:right;font-size:11px;letter-spacing:-0.2px">13207</div>
<div class="a" style="left:73px;top:240px;width:200px;height:16px;background:#fff;border-right:1px solid #c8c8c8;border-bottom:1px solid #c8c8c8"></div>
<div class="t" style="left:76px;top:242px;width:196px;overflow:hidden;font-size:11px;letter-spacing:-0.2px">3Dprint</div>
<div class="a" style="left:273px;top:240px;width:133px;height:16px;background:#fff;border-right:1px solid #c8c8c8;border-bottom:1px solid #c8c8c8"></div>
<div class="t" style="left:276px;top:242px;width:129px;overflow:hidden;font-size:11px;letter-spacing:-0.2px">via Eufemia 6</div>
<div class="a" style="left:406px;top:240px;width:100px;height:16px;background:#fff;border-right:1px solid #c8c8c8;border-bottom:1px solid #c8c8c8"></div>
<div class="t" style="left:409px;top:242px;width:96px;overflow:hidden;font-size:11px;letter-spacing:-0.2px">Frattamaggiore</div>
<div class="a" style="left:506px;top:240px;width:40px;height:16px;background:#fff;border-right:1px solid #c8c8c8;border-bottom:1px solid #c8c8c8"></div>
<div class="t" style="left:506px;top:242px;width:40px;text-align:center;font-size:11px;letter-spacing:-0.2px">NA</div>
<div class="a" style="left:546px;top:240px;width:80px;height:16px;background:#fff;border-right:1px solid #c8c8c8;border-bottom:1px solid #c8c8c8"></div>
<div class="t" style="left:549px;top:242px;width:76px;overflow:hidden;font-size:11px;letter-spacing:-0.2px">0818347575</div>
<div class="a" style="left:626px;top:240px;width:100px;height:16px;background:#fff;border-right:1px solid #c8c8c8;border-bottom:1px solid #c8c8c8"></div>
<div class="t" style="left:629px;top:242px;width:96px;overflow:hidden;font-size:11px;letter-spacing:-0.2px"></div>
<div class="a" style="left:726px;top:240px;width:73px;height:16px;background:#fff;border-right:1px solid #c8c8c8;border-bottom:1px solid #c8c8c8"></div>
<div class="t" style="left:729px;top:242px;width:69px;overflow:hidden;font-size:11px;letter-spacing:-0.2px"></div>
</div>
<div class="a" style="left:1007px;top:521px;width:51px;height:14px;border:1px dotted #333"></div>
<div class="a" style="left:1785px;top:504px;width:17px;height:246px;background:#fafafa;border-left:1px solid #e0e0e0"></div>
<div class="a" style="left:1786px;top:505px;width:16px;height:15px;background:linear-gradient(#f8f8f8,#dcdcdc);border:1px solid #a0a0a0;border-radius:2px"></div>
<svg class="a" style="left:1789px;top:509px" width="9" height="6" viewBox="0 0 9 6"><path d="M0.5 5.5H8.5L4.5 0.5Z" fill="#111"/></svg>
<div class="a" style="left:1786px;top:521px;width:16px;height:16px;background:linear-gradient(90deg,#f4f4f4,#dcdcdc);border:1px solid #a8a8a8;border-radius:2px"></div>
<div class="a" style="left:1786px;top:733px;width:16px;height:17px;background:linear-gradient(#f8f8f8,#dcdcdc);border:1px solid #a0a0a0;border-radius:2px"></div>
<svg class="a" style="left:1789px;top:739px" width="9" height="6" viewBox="0 0 9 6"><path d="M0.5 0.5H8.5L4.5 5.5Z" fill="#111"/></svg>
<div class="a" style="left:987px;top:750px;width:815px;height:17px;background:linear-gradient(#f4f4f4,#d8d8d8);border-top:1px solid #c8c8c8"></div>
<div class="a" style="left:987px;top:751px;width:16px;height:16px;background:linear-gradient(#f8f8f8,#dadada);border:1px solid #a8a8a8;border-radius:2px"></div>
<svg class="a" style="left:992px;top:755px" width="6" height="9" viewBox="0 0 6 9"><path d="M5.5 0.5V8.5L0.5 4.5Z" fill="#111"/></svg>
<div class="a" style="left:1740px;top:751px;width:28px;height:16px;background:#f8f8f8"></div>
<div class="a" style="left:1768px;top:751px;width:17px;height:16px;background:linear-gradient(#f8f8f8,#dadada);border:1px solid #a8a8a8;border-radius:2px"></div>
<svg class="a" style="left:1774px;top:755px" width="6" height="9" viewBox="0 0 6 9"><path d="M0.5 0.5V8.5L5.5 4.5Z" fill="#111"/></svg>
<div class="a" style="left:1785px;top:751px;width:17px;height:16px;background:#e4e4e4"></div>
<div class="a" style="left:986px;top:767px;width:817px;height:1px;background:#111"></div>
<div class="btn" style="left:988px;top:771px;width:98px;height:69px;"></div>
<div class="t" style="left:988px;top:824px;width:98px;text-align:center;font-size:11px;letter-spacing:-0.2px">Seleziona (F12)</div>
<div class="btn" style="left:1088px;top:771px;width:98px;height:69px;"></div>
<div class="t" style="left:1088px;top:824px;width:98px;text-align:center;font-size:11px;letter-spacing:-0.2px">Nuovo (F4)</div>
<div class="btn" style="left:1188px;top:771px;width:98px;height:69px;"></div>
<div class="t" style="left:1188px;top:824px;width:98px;text-align:center;font-size:11px;letter-spacing:-0.2px">Visualizza (F2)</div>
<div class="btn" style="left:1288px;top:771px;width:98px;height:69px;"></div>
<div class="t" style="left:1288px;top:824px;width:98px;text-align:center;font-size:11px;letter-spacing:-0.2px">Duplica</div>
<div class="btn" style="left:1388px;top:771px;width:98px;height:69px;"></div>
<div class="t" style="left:1388px;top:824px;width:98px;text-align:center;font-size:11px;letter-spacing:-0.2px">Stampa (F9)</div>
<div class="btn" style="left:1488px;top:771px;width:98px;height:69px;"></div>
<div class="t" style="left:1488px;top:824px;width:98px;text-align:center;font-size:11px;letter-spacing:-0.2px">Uscita (ESC)</div>
<svg class="a" style="left:1022px;top:784px" width="29" height="29" viewBox="0 0 29 29">
<defs><radialGradient id="okg" cx="0.4" cy="0.3" r="0.75"><stop offset="0" stop-color="#7ee05a"/><stop offset="1" stop-color="#168a16"/></radialGradient></defs>
<circle cx="14.5" cy="14.5" r="13.8" fill="url(#okg)"/>
<path d="M7 15 L12 20 L22 9" fill="none" stroke="#fff" stroke-width="3.6" stroke-linecap="round" stroke-linejoin="round"/>
</svg>
<svg class="a" style="left:1122px;top:784px" width="30" height="30" viewBox="0 0 30 30">
<rect x="1" y="1" width="27" height="27" fill="#fdfdfd" stroke="#9a9a9a" stroke-width="0.8"/>
<rect x="1" y="10" width="27" height="9" fill="#f6a830"/>
<path d="M10 1V28M19 1V28M1 10H28M1 19H28" stroke="#c0c0c0" stroke-width="0.8"/>
<path d="M18 15 H21 V18 H24 V21 H21 V24 H18 V21 H15 V18 H18Z" fill="#5ad040" stroke="#208a10" stroke-width="0.9"/>
</svg>
<svg class="a" style="left:1222px;top:784px" width="30" height="30" viewBox="0 0 30 30">
<rect x="1" y="1" width="27" height="27" fill="#fdfdfd" stroke="#9a9a9a" stroke-width="0.8"/>
<rect x="1" y="10" width="27" height="9" fill="#f6a830"/>
<path d="M10 1V28M19 1V28M1 10H28M1 19H28" stroke="#c0c0c0" stroke-width="0.8"/>
<rect x="13" y="15" width="10" height="10" fill="#f6f6f6" stroke="#888" stroke-width="0.7"/><path d="M14 18 L17 22 L27 11" fill="none" stroke="#1a3a9a" stroke-width="2.4"/>
</svg>
<svg class="a" style="left:1322px;top:782px" width="30" height="32" viewBox="0 0 30 32">
<path d="M11 1 H22 L28 7 V26 H11Z" fill="#d0c8ee" stroke="#8070c0" stroke-width="0.8"/>
<path d="M2 6 H14 L19 11 V31 H2Z" fill="#e6eefa" stroke="#6a88c0" stroke-width="0.8"/>
<rect x="3" y="16" width="15" height="8" fill="#a8bee0"/>
<path d="M14 6 V11 H19" fill="#a8c8f0" stroke="#6a88c0" stroke-width="0.8"/>
</svg>
<svg class="a" style="left:1421px;top:782px" width="32" height="30" viewBox="0 0 32 30">
<path d="M9 2 L20 0 L24 8 L11 10Z" fill="#b8e0ff" stroke="#7aa0c0" stroke-width="0.7"/>
<path d="M2 12 L16 8 L30 12 V22 L16 27 L2 22Z" fill="#e8e8e8" stroke="#909090" stroke-width="0.8"/>
<path d="M2 17 L16 21 L30 17 V22 L16 27 L2 22Z" fill="#b8b8b8"/>
<circle cx="25" cy="14" r="1.3" fill="#40c040"/>
</svg>
<svg class="a" style="left:1525px;top:786px" width="23" height="23" viewBox="0 0 24 24">
<rect x="0.5" y="0.5" width="23" height="23" rx="3" fill="#e03a1e" stroke="#b02010" stroke-width="1"/>
<rect x="1.5" y="1.5" width="21" height="10" rx="2" fill="#f06040" opacity="0.5"/>
<circle cx="12" cy="12" r="6.5" fill="none" stroke="#fff" stroke-width="2"/>
<path d="M12 7 V12.5" stroke="#fff" stroke-width="2.2"/>
</svg>
<div class="a" style="left:982px;top:856px;width:829px;height:27px;background:#e2e2e2"></div>
<div class="a" style="left:983px;top:858px;width:162px;height:22px;background:#dbdbdb;border:1px solid #c8c8c8;border-bottom-color:#f4f4f4;border-right-color:#f4f4f4;overflow:hidden"><div class="t" style="left:2px;top:3px;font-size:12.3px;font-weight:bold;color:#111;line-height:14px">3792 record trovati (2,7 sec</div></div>
<div class="a" style="left:1147px;top:858px;width:159px;height:22px;background:#dbdbdb;border:1px solid #c8c8c8;border-bottom-color:#f4f4f4;border-right-color:#f4f4f4;overflow:hidden"><div class="t" style="left:2px;top:3px;font-size:12.3px;font-weight:bold;color:#111;line-height:14px">Digigate s.r.l.</div></div>
<div class="a" style="left:1308px;top:858px;width:160px;height:22px;background:#dbdbdb;border:1px solid #c8c8c8;border-bottom-color:#f4f4f4;border-right-color:#f4f4f4;overflow:hidden"><div class="t" style="left:2px;top:3px;font-size:12.3px;font-weight:bold;color:#111;line-height:14px">Ready Pro V16.9.3</div></div>
<div class="a" style="left:1470px;top:858px;width:161px;height:22px;background:#dbdbdb;border:1px solid #c8c8c8;border-bottom-color:#f4f4f4;border-right-color:#f4f4f4;overflow:hidden"><div class="t" style="left:2px;top:3px;font-size:12.3px;font-weight:bold;color:#111;line-height:14px">Intestatario licenza : DIGIG</div></div>
<div class="a" style="left:1632px;top:858px;width:79px;height:22px;background:#dbdbdb;border:1px solid #c8c8c8;border-bottom-color:#f4f4f4;border-right-color:#f4f4f4;overflow:hidden"><div class="t" style="left:2px;top:3px;font-size:12.3px;font-weight:bold;color:#111;line-height:14px">14/11/2014</div></div>
<div class="a" style="left:1713px;top:858px;width:79px;height:22px;background:#dbdbdb;border:1px solid #c8c8c8;border-bottom-color:#f4f4f4;border-right-color:#f4f4f4;overflow:hidden"><div class="t" style="left:2px;top:3px;font-size:12.3px;font-weight:bold;color:#111;line-height:14px">12.27</div></div>
<svg class="a" style="left:1797px;top:866px" width="9" height="9" viewBox="0 0 9 9"><g fill="#a0a0a0"><rect x="6" y="0" width="2" height="2"/><rect x="3" y="3" width="2" height="2"/><rect x="6" y="3" width="2" height="2"/><rect x="0" y="6" width="2" height="2"/><rect x="3" y="6" width="2" height="2"/><rect x="6" y="6" width="2" height="2"/></g></svg>
</body></html>
